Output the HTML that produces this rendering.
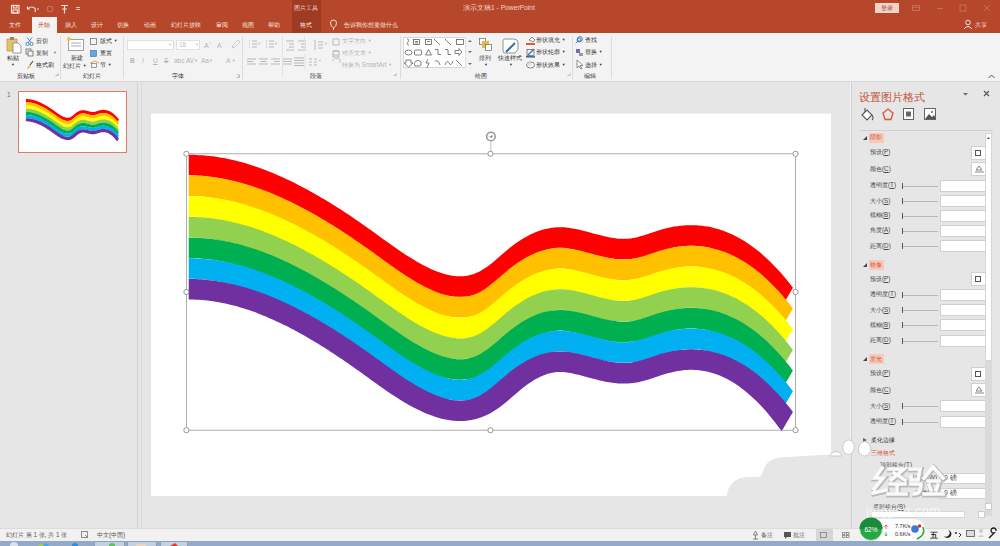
<!DOCTYPE html>
<html><head><meta charset="utf-8">
<style>
*{margin:0;padding:0;box-sizing:border-box}
html,body{width:1000px;height:546px;overflow:hidden;background:#e6e6e6;font-family:"Liberation Sans",sans-serif;position:relative}
.a{position:absolute}
.t{position:absolute;white-space:nowrap;font-family:"Liberation Sans",sans-serif}
svg{overflow:visible}
</style></head><body>
<div class="a" style="left:0px;top:0px;width:1000px;height:33px;background:#b7472a"></div>
<div class="a" style="left:292px;top:0px;width:29px;height:33px;background:#9f3b22"></div>
<svg class="a" style="left:0;top:0" width="100" height="17">
<g fill="none" stroke="#f6ddd6" stroke-width="1.2">
<rect x="11.5" y="5.5" width="7.5" height="7.5"/><rect x="13.5" y="5.5" width="3.5" height="2.5"/><rect x="13" y="10" width="4.5" height="3"/>
<path d="M28,8.5 q4,-3 7,0 q1,1.5 0,3.5"/><path d="M27.5,6.5 v2.5 h2.5"/>
<path d="M61,5.5 h7 M64.5,5.5 v8 M62,9 h5"/>
</g>
<path d="M37,9 h2" stroke="#f6ddd6" stroke-width="1"/>
<circle cx="50" cy="9" r="3" fill="none" stroke="#cf7a62" stroke-width="1"/>
<path d="M76,7.5 h4 M76,9.5 h4" stroke="#f6ddd6" stroke-width="0.8"/>
</svg>
<div class="t" style="left:294px;top:3.9px;font-size:6.3px;line-height:8.2px;color:#f3d5cc;font-weight:normal;">图片工具</div>
<div class="t" style="left:463px;top:3.6px;font-size:6.7px;line-height:8.7px;color:#f3d5cc;font-weight:normal;">演示文稿1 - PowerPoint</div>
<div class="a" style="left:875px;top:3px;width:24px;height:10px;background:#f3d3c9"></div>
<div class="t" style="left:881px;top:3.9px;font-size:6.3px;line-height:8.2px;color:#8d3520;font-weight:normal;">登录</div>
<svg class="a" style="left:900;top:0" width="100" height="33">
<g fill="none" stroke="#c9735d" stroke-width="0.9">
<rect x="12.5" y="5.5" width="7" height="5"/><path d="M12.5,7.5 h7"/>
<path d="M37,8.5 h6"/>
<rect x="60" y="5" width="6" height="6"/>
<path d="M84,5 l6,6 M90,5 l-6,6"/>
</g>
<g fill="none" stroke="#f6ddd6" stroke-width="1">
<circle cx="68" cy="22.5" r="2.3"/><path d="M64,29 q4,-5 8,0"/>
</g>
</svg>
<div class="t" style="left:975px;top:20.9px;font-size:6.3px;line-height:8.2px;color:#f6ddd6;font-weight:normal;">共享</div>
<div class="a" style="left:32px;top:17px;width:25px;height:16px;background:#f3f3f3"></div>
<div class="t" style="left:9px;top:20.9px;font-size:6.3px;line-height:8.2px;color:#f8e3dc;font-weight:normal;">文件</div>
<div class="t" style="left:65px;top:20.9px;font-size:6.3px;line-height:8.2px;color:#f8e3dc;font-weight:normal;">插入</div>
<div class="t" style="left:91px;top:20.9px;font-size:6.3px;line-height:8.2px;color:#f8e3dc;font-weight:normal;">设计</div>
<div class="t" style="left:117px;top:20.9px;font-size:6.3px;line-height:8.2px;color:#f8e3dc;font-weight:normal;">切换</div>
<div class="t" style="left:144px;top:20.9px;font-size:6.3px;line-height:8.2px;color:#f8e3dc;font-weight:normal;">动画</div>
<div class="t" style="left:171px;top:20.9px;font-size:6.3px;line-height:8.2px;color:#f8e3dc;font-weight:normal;">幻灯片放映</div>
<div class="t" style="left:216px;top:20.9px;font-size:6.3px;line-height:8.2px;color:#f8e3dc;font-weight:normal;">审阅</div>
<div class="t" style="left:242px;top:20.9px;font-size:6.3px;line-height:8.2px;color:#f8e3dc;font-weight:normal;">视图</div>
<div class="t" style="left:268px;top:20.9px;font-size:6.3px;line-height:8.2px;color:#f8e3dc;font-weight:normal;">帮助</div>
<div class="t" style="left:300px;top:20.9px;font-size:6.3px;line-height:8.2px;color:#f8e3dc;font-weight:normal;">格式</div>
<div class="t" style="left:38px;top:20.9px;font-size:6.3px;line-height:8.2px;color:#b7472a;font-weight:normal;">开始</div>
<svg class="a" style="left:328;top:18" width="12" height="14"><g fill="none" stroke="#f6ddd6" stroke-width="1"><path d="M5.5,12 v-2 q-3,-2 -3,-5 a3,3 0 0 1 6,0 q0,3 -3,5"/></g></svg>
<div class="t" style="left:344px;top:21.0px;font-size:6.2px;line-height:8.1px;color:#f8e3dc;font-weight:normal;">告诉我你想要做什么</div>
<div class="a" style="left:0px;top:33px;width:1000px;height:48px;background:#f3f3f3"></div>
<div class="a" style="left:0px;top:81px;width:1000px;height:1px;background:#d8d8d8"></div>
<div class="a" style="left:60px;top:36px;width:1px;height:43px;background:#dcdcdc"></div>
<div class="a" style="left:123px;top:36px;width:1px;height:43px;background:#dcdcdc"></div>
<div class="a" style="left:242px;top:36px;width:1px;height:43px;background:#dcdcdc"></div>
<div class="a" style="left:400px;top:36px;width:1px;height:43px;background:#dcdcdc"></div>
<div class="a" style="left:572px;top:36px;width:1px;height:43px;background:#dcdcdc"></div>
<div class="a" style="left:611px;top:36px;width:1px;height:43px;background:#dcdcdc"></div>
<svg class="a" style="left:0;top:33" width="62" height="48">
<rect x="7" y="6" width="10" height="12" fill="#e6c16a" stroke="#b08a3a" stroke-width="0.6"/>
<rect x="10" y="4" width="4" height="3" fill="#888"/>
<path d="M13,10 h5 l3,3 v7 h-8 z" fill="#fff" stroke="#777" stroke-width="0.7"/>
<g fill="none" stroke="#3b7fc4" stroke-width="0.9"><circle cx="27.5" cy="11" r="1.6"/><circle cx="31.5" cy="11" r="1.6"/><path d="M28,9.5 l4,-5 M31,9.5 l-4,-5"/></g>
<g fill="none" stroke="#666" stroke-width="0.8"><rect x="26" y="16" width="5" height="5"/><rect x="28" y="18" width="5" height="5" fill="#f3f3f3"/></g>
<path d="M27,35 l3,-3 l1,1 l-3,3 z" fill="#e2b04a"/><path d="M30,32 l3,-4" stroke="#555" stroke-width="1.2"/>
<path d="M55.5,42.5 h2.5 v-2.5" fill="none" stroke="#888" stroke-width="0.6"/>
</svg>
<div class="t" style="left:7px;top:53.9px;font-size:6.3px;line-height:8.2px;color:#363636;font-weight:normal;">粘贴</div>
<div class="t" style="left:11px;top:62.5px;font-size:3.8px;line-height:4.9px;color:#363636;font-weight:normal;">▼</div>
<div class="t" style="left:36px;top:36.9px;font-size:6.3px;line-height:8.2px;color:#363636;font-weight:normal;">剪切</div>
<div class="t" style="left:36px;top:48.9px;font-size:6.3px;line-height:8.2px;color:#363636;font-weight:normal;">复制</div>
<div class="t" style="left:53px;top:50.5px;font-size:3.8px;line-height:4.9px;color:#777;font-weight:normal;">▼</div>
<div class="t" style="left:36px;top:60.9px;font-size:6.3px;line-height:8.2px;color:#363636;font-weight:normal;">格式刷</div>
<div class="t" style="left:17px;top:71.9px;font-size:6.3px;line-height:8.2px;color:#363636;font-weight:normal;">剪贴板</div>
<svg class="a" style="left:60;top:33" width="64" height="48">
<rect x="8.5" y="6.5" width="15" height="11" fill="#fff" stroke="#888" stroke-width="0.8"/>
<path d="M11,10 h10 M11,13 h10" stroke="#aab" stroke-width="1.2"/>
<circle cx="9" cy="6" r="2" fill="#f2c744"/>
<rect x="30.5" y="5.5" width="6" height="6" fill="none" stroke="#777" stroke-width="0.8"/>
<rect x="30.5" y="17.5" width="6" height="6" fill="#6aa3d8" stroke="#3a6ea5" stroke-width="0.6"/>
<path d="M30,30 l5,-2 l4,2" stroke="#e8a070" stroke-width="1" fill="none"/><rect x="31.5" y="30.5" width="5" height="4" fill="none" stroke="#777" stroke-width="0.7"/>
</svg>
<div class="t" style="left:71px;top:53.9px;font-size:6.3px;line-height:8.2px;color:#363636;font-weight:normal;">新建</div>
<div class="t" style="left:63px;top:61.9px;font-size:6.3px;line-height:8.2px;color:#363636;font-weight:normal;">幻灯片 <span style="font-size:3.8px;vertical-align:1px">▼</span></div>
<div class="t" style="left:100px;top:36.9px;font-size:6.3px;line-height:8.2px;color:#363636;font-weight:normal;">版式 <span style="font-size:3.8px;vertical-align:1px">▼</span></div>
<div class="t" style="left:100px;top:48.9px;font-size:6.3px;line-height:8.2px;color:#363636;font-weight:normal;">重置</div>
<div class="t" style="left:100px;top:60.9px;font-size:6.3px;line-height:8.2px;color:#363636;font-weight:normal;">节 <span style="font-size:3.8px;vertical-align:1px">▼</span></div>
<div class="t" style="left:83px;top:71.9px;font-size:6.3px;line-height:8.2px;color:#363636;font-weight:normal;">幻灯片</div>
<div class="a" style="left:127px;top:40px;width:47px;height:10px;background:#fff;border:1px solid #e0e0e0"></div>
<div class="a" style="left:176px;top:40px;width:24px;height:10px;background:#fff;border:1px solid #e0e0e0"></div>
<div class="t" style="left:168px;top:42.5px;font-size:3.8px;line-height:4.9px;color:#ccc;font-weight:normal;">▼</div>
<div class="t" style="left:195px;top:42.5px;font-size:3.8px;line-height:4.9px;color:#ccc;font-weight:normal;">▼</div>
<div class="t" style="left:179px;top:40.9px;font-size:6.3px;line-height:8.2px;color:#bbb;font-weight:normal;">18</div>
<div class="t" style="left:204px;top:38.5px;font-size:7px;line-height:9.1px;color:#b4b4b4;font-weight:normal;">A<sup style="font-size:4px">^</sup></div>
<div class="t" style="left:217px;top:38.5px;font-size:7px;line-height:9.1px;color:#b4b4b4;font-weight:normal;">A<sup style="font-size:4px">ˇ</sup></div>
<svg class="a" style="left:231px;top:40px" width="9" height="9"><path d="M1,8 l1,-3 l5,-5 l2,2 l-5,5 z" fill="none" stroke="#c0c0c0" stroke-width="0.8"/></svg>
<div class="t" style="left:130px;top:56.8px;font-size:6.5px;line-height:8.5px;color:#b4b4b4;font-weight:normal;"><b>B</b></div>
<div class="t" style="left:142px;top:56.8px;font-size:6.5px;line-height:8.5px;color:#b4b4b4;font-weight:normal;"><i>I</i></div>
<div class="t" style="left:153px;top:56.8px;font-size:6.5px;line-height:8.5px;color:#b4b4b4;font-weight:normal;"><u>U</u></div>
<div class="t" style="left:164px;top:56.8px;font-size:6.5px;line-height:8.5px;color:#b4b4b4;font-weight:normal;"><s>S</s></div>
<div class="t" style="left:174px;top:56.8px;font-size:6.5px;line-height:8.5px;color:#b4b4b4;font-weight:normal;">abc</div>
<div class="t" style="left:186px;top:56.8px;font-size:6.5px;line-height:8.5px;color:#b4b4b4;font-weight:normal;">AV<span style="font-size:3.8px;vertical-align:1px">▼</span></div>
<div class="t" style="left:201px;top:56.8px;font-size:6.5px;line-height:8.5px;color:#b4b4b4;font-weight:normal;">Aa<span style="font-size:3.8px;vertical-align:1px">▼</span></div>
<div class="t" style="left:226px;top:56.8px;font-size:6.5px;line-height:8.5px;color:#b4b4b4;font-weight:normal;">A <span style="font-size:3.8px;vertical-align:1px">▼</span></div>
<div class="t" style="left:172px;top:71.9px;font-size:6.3px;line-height:8.2px;color:#363636;font-weight:normal;">字体</div>
<svg class="a" style="left:236;top:73" width="6" height="6"><path d="M0.5,4.5 h3 v-3 M1,1 l3,3" fill="none" stroke="#999" stroke-width="0.6"/></svg>
<svg class="a" style="left:243;top:33" width="160" height="48">
<g stroke="#b8b8b8" stroke-width="1" fill="none">
<path d="M6,8 h1 M9,8 h5 M6,11 h1 M9,11 h5 M6,14 h1 M9,14 h5"/>
<path d="M23,8 h1 M26,8 h5 M23,11 h1 M26,11 h5 M23,14 h1 M26,14 h5"/>
<path d="M43,8 h8 M46,11 h5 M46,14 h5 M43,17 h8"/>
<path d="M55,8 h8 M58,11 h5 M58,14 h5 M55,17 h8"/>
<path d="M72,7 v10 M75,9 h5 M75,12 h5 M75,15 h5"/>
<path d="M90,6 h6 v6 h-6 z M90,18 h6 M90,22 h6"/>
<path d="M90,18 h6 v6 h-6 z"/>
<path d="M4,26 h9 M4,28.5 h6 M4,31 h9"/>
<path d="M16,26 h9 M17.5,28.5 h6 M16,31 h9"/>
<path d="M28,26 h9 M31,28.5 h6 M28,31 h9"/>
<path d="M40,26 h9 M40,28.5 h9 M40,31 h9"/>
<path d="M51,25 h10 M51,27.5 h10 M51,30 h10 M51,32.5 h10"/>
<path d="M66,26 h3 M66,29 h3 M66,32 h3 M71,26 h3 M71,29 h3 M71,32 h3"/>
</g>
<path d="M89,28 q3,-4 8,-2 v4" fill="none" stroke="#bbb" stroke-width="0.8"/>
<path d="M39.5,3 v40 M61.5,3 v15 M62,22 v15" stroke="#e2e2e2" stroke-width="1"/>
<path d="M150.5,42.5 h2.5 v-2.5" fill="none" stroke="#999" stroke-width="0.6"/>
</svg>
<div class="t" style="left:257px;top:41.5px;font-size:3.8px;line-height:4.9px;color:#c4c4c4;font-weight:normal;">▼</div>
<div class="t" style="left:274px;top:41.5px;font-size:3.8px;line-height:4.9px;color:#c4c4c4;font-weight:normal;">▼</div>
<div class="t" style="left:324px;top:41.5px;font-size:3.8px;line-height:4.9px;color:#c4c4c4;font-weight:normal;">▼</div>
<div class="t" style="left:318px;top:58.5px;font-size:3.8px;line-height:4.9px;color:#c4c4c4;font-weight:normal;">▼</div>
<div class="t" style="left:342px;top:36.9px;font-size:6.3px;line-height:8.2px;color:#b4b4b4;font-weight:normal;">文字方向 <span style="font-size:3.8px;vertical-align:1px">▼</span></div>
<div class="t" style="left:342px;top:48.9px;font-size:6.3px;line-height:8.2px;color:#b4b4b4;font-weight:normal;">对齐文本 <span style="font-size:3.8px;vertical-align:1px">▼</span></div>
<div class="t" style="left:342px;top:60.9px;font-size:6.3px;line-height:8.2px;color:#b4b4b4;font-weight:normal;">转换为 SmartArt <span style="font-size:3.8px;vertical-align:1px">▼</span></div>
<div class="t" style="left:310px;top:71.9px;font-size:6.3px;line-height:8.2px;color:#363636;font-weight:normal;">段落</div>
<div class="a" style="left:403px;top:37px;width:70px;height:31px;background:#fff;border:1px solid #d6d6d6"></div>
<div class="a" style="left:465px;top:37px;width:8px;height:31px;background:#f3f3f3;border-left:1px solid #e0e0e0"></div>
<svg class="a" style="left:400;top:33" width="175" height="48">
<g fill="none" stroke="#606060" stroke-width="0.8">
<path d="M7,6 q3,0 1,3 q-2,3 1,3"/>
<rect x="13.5" y="6.5" width="6" height="5"/><path d="M15,8.5 h3 M15,10 h3"/>
<rect x="25.5" y="6.5" width="6" height="5"/><path d="M27,8.5 h3"/>
<path d="M34,6 l6,6 M45,6 l6,6"/><rect x="56.5" y="6.5" width="7" height="5"/>
<ellipse cx="8.5" cy="19.5" rx="3.5" ry="2.5"/><rect x="14.5" y="17" width="7" height="5" rx="1"/>
<path d="M28.5,16.5 l3,5.5 h-6 z"/><path d="M35,16.5 h3 v5 h3"/><path d="M45,16.5 h3 v5 h3"/>
<path d="M55,17.5 h4 v-2 l3,3.5 l-3,3.5 v-2 h-4 z"/>
<path d="M6,27 h5 v3 h2 l-4.5,4 l-4.5,-4 h2 z"/><path d="M15,33 q-2,-3 1,-5 q2,-2 5,1 q1,4 -2,4 z"/>
<path d="M28,26 l-2,4 h3 l-2,5"/><path d="M35,28 q4,-1 5,4"/><path d="M45,32 q2,-6 4,-2 q2,4 4,-2"/><path d="M56,27 l6,6"/>
</g>
<g fill="#707070"><path d="M68,9 l2,-2 l2,2 z"/><path d="M68,18 l2,2 l2,-2 z"/><path d="M68,29 h4 M68,30 l2,2 l2,-2 z"/></g>
<rect x="79.5" y="5.5" width="6" height="6" fill="#fff" stroke="#666" stroke-width="0.7"/>
<rect x="82" y="8" width="7" height="7" fill="#e8b64c"/>
<rect x="85.5" y="11.5" width="6" height="6" fill="#fff" stroke="#666" stroke-width="0.7"/>
<path d="M105,6 h9 q4,0 4,4 v6 l-3,4 h-10 q-2,0 -2,-2 v-10 q0,-2 2,-2 z" fill="#fff" stroke="#777" stroke-width="0.8"/>
<path d="M106,19 l9,-9" stroke="#3a6ea5" stroke-width="2"/>
<path d="M129,7 l3,-3 l3,3 l-2,2 z" fill="none" stroke="#555" stroke-width="0.7"/><rect x="126" y="10" width="9" height="2" fill="#e35b2c"/>
<rect x="127" y="16.5" width="7" height="6" fill="none" stroke="#555" stroke-width="0.7"/><path d="M128,22 l6,-6" stroke="#3a6ea5" stroke-width="1.2"/><rect x="126" y="23" width="9" height="1.6" fill="#3a6ea5"/>
<ellipse cx="130.5" cy="32" rx="4" ry="3" fill="#fff" stroke="#666" stroke-width="0.8"/><ellipse cx="129.5" cy="31" rx="2.5" ry="1.8" fill="#ddd"/>
<circle cx="179" cy="7" r="2" fill="none" stroke="#2f6db5" stroke-width="0.9"/>
<path d="M167.5,42.5 h2.5 v-2.5" fill="none" stroke="#999" stroke-width="0.6"/>
</svg>
<div class="t" style="left:479px;top:53.9px;font-size:6.3px;line-height:8.2px;color:#363636;font-weight:normal;">排列</div>
<div class="t" style="left:484px;top:63.0px;font-size:3.8px;line-height:4.9px;color:#363636;font-weight:normal;">▼</div>
<div class="t" style="left:498px;top:53.9px;font-size:6.3px;line-height:8.2px;color:#363636;font-weight:normal;">快速样式</div>
<div class="t" style="left:509px;top:63.0px;font-size:3.8px;line-height:4.9px;color:#363636;font-weight:normal;">▼</div>
<div class="t" style="left:536px;top:35.9px;font-size:6.3px;line-height:8.2px;color:#363636;font-weight:normal;">形状填充 <span style="font-size:3.8px;vertical-align:1px">▼</span></div>
<div class="t" style="left:536px;top:48.4px;font-size:6.3px;line-height:8.2px;color:#363636;font-weight:normal;">形状轮廓 <span style="font-size:3.8px;vertical-align:1px">▼</span></div>
<div class="t" style="left:536px;top:60.9px;font-size:6.3px;line-height:8.2px;color:#363636;font-weight:normal;">形状效果 <span style="font-size:3.8px;vertical-align:1px">▼</span></div>
<div class="t" style="left:475px;top:71.9px;font-size:6.3px;line-height:8.2px;color:#363636;font-weight:normal;">绘图</div>
<svg class="a" style="left:574;top:33" width="40" height="48">
<g fill="none" stroke="#2f6db5" stroke-width="0.9"><circle cx="6" cy="6" r="2.4"/><path d="M4.2,7.8 l-2.5,2.5"/></g>
<g fill="#7a6aa8"><rect x="2" y="16" width="4" height="4"/><rect x="5" y="20" width="4" height="3" fill="#9b8fc4"/></g>
<path d="M3,27 v8 l2,-2 l2,3 l1,-0.5 l-2,-3 h3 z" fill="#fff" stroke="#666" stroke-width="0.7"/>
</svg>
<div class="t" style="left:585px;top:35.9px;font-size:6.3px;line-height:8.2px;color:#363636;font-weight:normal;">查找</div>
<div class="t" style="left:585px;top:48.4px;font-size:6.3px;line-height:8.2px;color:#363636;font-weight:normal;">替换 <span style="font-size:3.8px;vertical-align:1px">▼</span></div>
<div class="t" style="left:585px;top:60.9px;font-size:6.3px;line-height:8.2px;color:#363636;font-weight:normal;">选择 <span style="font-size:3.8px;vertical-align:1px">▼</span></div>
<div class="t" style="left:584px;top:71.9px;font-size:6.3px;line-height:8.2px;color:#363636;font-weight:normal;">编辑</div>
<svg class="a" style="left:986;top:72" width="12" height="8"><path d="M2.5,6 l3,-3 l3,3" fill="none" stroke="#555" stroke-width="1"/></svg>
<div class="a" style="left:0px;top:82px;width:137px;height:446px;background:#e6e6e6"></div>
<div class="a" style="left:137px;top:82px;width:1px;height:446px;background:#d2d2d2"></div>
<div class="a" style="left:138px;top:82px;width:714px;height:446px;background:#e6e6e6"></div>
<div class="a" style="left:141px;top:82px;width:1px;height:446px;background:#dcdcdc"></div>
<div class="t" style="left:7px;top:90.8px;font-size:6.5px;line-height:8.5px;color:#666;font-weight:normal;">1</div>
<div class="a" style="left:18px;top:91px;width:109px;height:62px;background:#fff;border:1.5px solid #de7b62"></div>
<svg class="a" style="left:0;top:0" width="1000" height="546">
<defs><clipPath id="capclip" clipPathUnits="userSpaceOnUse"><path d="M0,-50 L992.1,-50 L549.8,700 L0,700 Z"/></clipPath></defs>
<g transform="translate(20.1,92.6) scale(0.154,0.154) translate(-151,-113)"><g fill="none" stroke-width="20.5" stroke-linecap="butt" stroke-linejoin="round"><path d="M188.7,165.1 L191.5,165.1 L194.4,165.1 L197.2,165.3 L200.1,165.4 L203.0,165.6 L205.8,165.9 L208.7,166.2 L211.6,166.5 L214.4,166.9 L217.3,167.4 L220.2,167.8 L223.1,168.4 L226.0,169.0 L228.9,169.6 L231.8,170.3 L234.6,171.0 L237.5,171.7 L240.5,172.5 L243.4,173.4 L246.3,174.3 L249.2,175.2 L252.1,176.2 L255.0,177.2 L257.9,178.2 L260.9,179.3 L263.8,180.5 L266.7,181.6 L269.7,182.8 L272.6,184.1 L275.5,185.4 L278.5,186.7 L281.4,188.1 L284.4,189.4 L287.3,190.9 L290.3,192.3 L293.2,193.8 L296.2,195.4 L299.2,196.9 L302.1,198.5 L305.1,200.2 L308.1,201.8 L311.0,203.5 L314.0,205.2 L317.0,207.0 L319.9,208.7 L322.9,210.5 L325.9,212.4 L328.9,214.2 L331.9,216.1 L334.9,218.0 L337.8,220.0 L340.8,221.9 L343.8,223.9 L346.8,225.9 L349.8,228.0 L352.8,230.0 L355.8,232.1 L358.8,234.2 L361.8,236.3 L364.8,238.4 L367.8,240.6 L370.8,242.8 L373.9,245.0 L376.9,247.2 L380.0,249.4 L383.0,251.6 L386.1,253.7 L389.2,255.9 L392.3,258.1 L395.4,260.2 L398.5,262.3 L401.6,264.3 L404.8,266.3 L408.0,268.3 L411.1,270.2 L414.3,272.0 L417.6,273.8 L420.8,275.4 L424.0,277.0 L427.3,278.6 L430.6,280.0 L434.0,281.3 L437.3,282.5 L440.7,283.6 L444.2,284.5 L447.7,285.3 L451.2,285.9 L454.9,286.4 L458.6,286.6 L462.3,286.6 L466.1,286.3 L469.9,285.7 L473.7,284.8 L477.5,283.6 L481.2,282.1 L485.0,280.3 L488.6,278.1 L492.1,275.8 L495.4,273.3 L498.7,270.7 L501.9,268.1 L505.0,265.4 L508.0,262.8 L511.0,260.2 L513.9,257.7 L516.8,255.4 L519.6,253.3 L522.4,251.2 L525.2,249.4 L527.9,247.6 L530.6,246.0 L533.3,244.6 L536.0,243.2 L538.7,242.1 L541.3,241.0 L543.9,240.1 L546.5,239.3 L549.1,238.7 L551.6,238.2 L554.2,237.8 L556.7,237.6 L559.2,237.5 L561.7,237.5 L564.3,237.6 L566.9,237.9 L569.6,238.3 L572.3,238.8 L575.1,239.3 L577.9,240.0 L580.8,240.7 L583.7,241.4 L586.7,242.2 L589.7,243.1 L592.8,243.9 L595.9,244.7 L599.0,245.5 L602.2,246.3 L605.5,247.0 L608.8,247.7 L612.2,248.2 L615.6,248.7 L619.1,249.0 L622.6,249.1 L626.2,249.1 L629.8,248.8 L633.5,248.4 L637.0,247.7 L640.5,246.9 L643.8,246.0 L647.1,245.0 L650.3,244.0 L653.4,242.9 L656.4,241.9 L659.4,240.9 L662.2,240.0 L665.0,239.2 L667.8,238.5 L670.6,237.8 L673.3,237.2 L676.1,236.7 L678.8,236.3 L681.6,235.9 L684.3,235.7 L687.0,235.5 L689.7,235.4 L692.5,235.4 L695.2,235.5 L697.9,235.7 L700.6,235.9 L703.3,236.3 L706.0,236.7 L708.7,237.2 L711.4,237.9 L714.1,238.6 L716.8,239.4 L719.5,240.3 L722.3,241.3 L725.0,242.5 L727.7,243.7 L730.5,245.0 L733.3,246.5 L736.0,248.1 L738.8,249.7 L741.6,251.5 L744.4,253.4 L747.2,255.5 L750.0,257.6 L752.9,259.9 L755.7,262.3 L758.6,264.9 L761.4,267.5 L764.3,270.3 L767.2,273.3 L770.1,276.3 L773.0,279.5 L775.9,282.9 L778.8,286.4 L781.7,290.0 L784.6,293.8 L789.5,300.2 L794.3,306.5 L799.2,312.9" transform="translate(0,0.00)" stroke="#FF0000" clip-path="url(#capclip)"/>
<path d="M188.7,165.1 L191.5,165.1 L194.4,165.1 L197.2,165.3 L200.1,165.4 L203.0,165.6 L205.8,165.9 L208.7,166.2 L211.6,166.5 L214.4,166.9 L217.3,167.4 L220.2,167.8 L223.1,168.4 L226.0,169.0 L228.9,169.6 L231.8,170.3 L234.6,171.0 L237.5,171.7 L240.5,172.5 L243.4,173.4 L246.3,174.3 L249.2,175.2 L252.1,176.2 L255.0,177.2 L257.9,178.2 L260.9,179.3 L263.8,180.5 L266.7,181.6 L269.7,182.8 L272.6,184.1 L275.5,185.4 L278.5,186.7 L281.4,188.1 L284.4,189.4 L287.3,190.9 L290.3,192.3 L293.2,193.8 L296.2,195.4 L299.2,196.9 L302.1,198.5 L305.1,200.2 L308.1,201.8 L311.0,203.5 L314.0,205.2 L317.0,207.0 L319.9,208.7 L322.9,210.5 L325.9,212.4 L328.9,214.2 L331.9,216.1 L334.9,218.0 L337.8,220.0 L340.8,221.9 L343.8,223.9 L346.8,225.9 L349.8,228.0 L352.8,230.0 L355.8,232.1 L358.8,234.2 L361.8,236.3 L364.8,238.4 L367.8,240.6 L370.8,242.8 L373.9,245.0 L376.9,247.2 L380.0,249.4 L383.0,251.6 L386.1,253.7 L389.2,255.9 L392.3,258.1 L395.4,260.2 L398.5,262.3 L401.6,264.3 L404.8,266.3 L408.0,268.3 L411.1,270.2 L414.3,272.0 L417.6,273.8 L420.8,275.4 L424.0,277.0 L427.3,278.6 L430.6,280.0 L434.0,281.3 L437.3,282.5 L440.7,283.6 L444.2,284.5 L447.7,285.3 L451.2,285.9 L454.9,286.4 L458.6,286.6 L462.3,286.6 L466.1,286.3 L469.9,285.7 L473.7,284.8 L477.5,283.6 L481.2,282.1 L485.0,280.3 L488.6,278.1 L492.1,275.8 L495.4,273.3 L498.7,270.7 L501.9,268.1 L505.0,265.4 L508.0,262.8 L511.0,260.2 L513.9,257.7 L516.8,255.4 L519.6,253.3 L522.4,251.2 L525.2,249.4 L527.9,247.6 L530.6,246.0 L533.3,244.6 L536.0,243.2 L538.7,242.1 L541.3,241.0 L543.9,240.1 L546.5,239.3 L549.1,238.7 L551.6,238.2 L554.2,237.8 L556.7,237.6 L559.2,237.5 L561.7,237.5 L564.3,237.6 L566.9,237.9 L569.6,238.3 L572.3,238.8 L575.1,239.3 L577.9,240.0 L580.8,240.7 L583.7,241.4 L586.7,242.2 L589.7,243.1 L592.8,243.9 L595.9,244.7 L599.0,245.5 L602.2,246.3 L605.5,247.0 L608.8,247.7 L612.2,248.2 L615.6,248.7 L619.1,249.0 L622.6,249.1 L626.2,249.1 L629.8,248.8 L633.5,248.4 L637.0,247.7 L640.5,246.9 L643.8,246.0 L647.1,245.0 L650.3,244.0 L653.4,242.9 L656.4,241.9 L659.4,240.9 L662.2,240.0 L665.0,239.2 L667.8,238.5 L670.6,237.8 L673.3,237.2 L676.1,236.7 L678.8,236.3 L681.6,235.9 L684.3,235.7 L687.0,235.5 L689.7,235.4 L692.5,235.4 L695.2,235.5 L697.9,235.7 L700.6,235.9 L703.3,236.3 L706.0,236.7 L708.7,237.2 L711.4,237.9 L714.1,238.6 L716.8,239.4 L719.5,240.3 L722.3,241.3 L725.0,242.5 L727.7,243.7 L730.5,245.0 L733.3,246.5 L736.0,248.1 L738.8,249.7 L741.6,251.5 L744.4,253.4 L747.2,255.5 L750.0,257.6 L752.9,259.9 L755.7,262.3 L758.6,264.9 L761.4,267.5 L764.3,270.3 L767.2,273.3 L770.1,276.3 L773.0,279.5 L775.9,282.9 L778.8,286.4 L781.7,290.0 L784.6,293.8 L789.5,300.2 L794.3,306.5 L799.2,312.9" transform="translate(0,20.70)" stroke="#FFC000" clip-path="url(#capclip)"/>
<path d="M188.7,165.1 L191.5,165.1 L194.4,165.1 L197.2,165.3 L200.1,165.4 L203.0,165.6 L205.8,165.9 L208.7,166.2 L211.6,166.5 L214.4,166.9 L217.3,167.4 L220.2,167.8 L223.1,168.4 L226.0,169.0 L228.9,169.6 L231.8,170.3 L234.6,171.0 L237.5,171.7 L240.5,172.5 L243.4,173.4 L246.3,174.3 L249.2,175.2 L252.1,176.2 L255.0,177.2 L257.9,178.2 L260.9,179.3 L263.8,180.5 L266.7,181.6 L269.7,182.8 L272.6,184.1 L275.5,185.4 L278.5,186.7 L281.4,188.1 L284.4,189.4 L287.3,190.9 L290.3,192.3 L293.2,193.8 L296.2,195.4 L299.2,196.9 L302.1,198.5 L305.1,200.2 L308.1,201.8 L311.0,203.5 L314.0,205.2 L317.0,207.0 L319.9,208.7 L322.9,210.5 L325.9,212.4 L328.9,214.2 L331.9,216.1 L334.9,218.0 L337.8,220.0 L340.8,221.9 L343.8,223.9 L346.8,225.9 L349.8,228.0 L352.8,230.0 L355.8,232.1 L358.8,234.2 L361.8,236.3 L364.8,238.4 L367.8,240.6 L370.8,242.8 L373.9,245.0 L376.9,247.2 L380.0,249.4 L383.0,251.6 L386.1,253.7 L389.2,255.9 L392.3,258.1 L395.4,260.2 L398.5,262.3 L401.6,264.3 L404.8,266.3 L408.0,268.3 L411.1,270.2 L414.3,272.0 L417.6,273.8 L420.8,275.4 L424.0,277.0 L427.3,278.6 L430.6,280.0 L434.0,281.3 L437.3,282.5 L440.7,283.6 L444.2,284.5 L447.7,285.3 L451.2,285.9 L454.9,286.4 L458.6,286.6 L462.3,286.6 L466.1,286.3 L469.9,285.7 L473.7,284.8 L477.5,283.6 L481.2,282.1 L485.0,280.3 L488.6,278.1 L492.1,275.8 L495.4,273.3 L498.7,270.7 L501.9,268.1 L505.0,265.4 L508.0,262.8 L511.0,260.2 L513.9,257.7 L516.8,255.4 L519.6,253.3 L522.4,251.2 L525.2,249.4 L527.9,247.6 L530.6,246.0 L533.3,244.6 L536.0,243.2 L538.7,242.1 L541.3,241.0 L543.9,240.1 L546.5,239.3 L549.1,238.7 L551.6,238.2 L554.2,237.8 L556.7,237.6 L559.2,237.5 L561.7,237.5 L564.3,237.6 L566.9,237.9 L569.6,238.3 L572.3,238.8 L575.1,239.3 L577.9,240.0 L580.8,240.7 L583.7,241.4 L586.7,242.2 L589.7,243.1 L592.8,243.9 L595.9,244.7 L599.0,245.5 L602.2,246.3 L605.5,247.0 L608.8,247.7 L612.2,248.2 L615.6,248.7 L619.1,249.0 L622.6,249.1 L626.2,249.1 L629.8,248.8 L633.5,248.4 L637.0,247.7 L640.5,246.9 L643.8,246.0 L647.1,245.0 L650.3,244.0 L653.4,242.9 L656.4,241.9 L659.4,240.9 L662.2,240.0 L665.0,239.2 L667.8,238.5 L670.6,237.8 L673.3,237.2 L676.1,236.7 L678.8,236.3 L681.6,235.9 L684.3,235.7 L687.0,235.5 L689.7,235.4 L692.5,235.4 L695.2,235.5 L697.9,235.7 L700.6,235.9 L703.3,236.3 L706.0,236.7 L708.7,237.2 L711.4,237.9 L714.1,238.6 L716.8,239.4 L719.5,240.3 L722.3,241.3 L725.0,242.5 L727.7,243.7 L730.5,245.0 L733.3,246.5 L736.0,248.1 L738.8,249.7 L741.6,251.5 L744.4,253.4 L747.2,255.5 L750.0,257.6 L752.9,259.9 L755.7,262.3 L758.6,264.9 L761.4,267.5 L764.3,270.3 L767.2,273.3 L770.1,276.3 L773.0,279.5 L775.9,282.9 L778.8,286.4 L781.7,290.0 L784.6,293.8 L789.5,300.2 L794.3,306.5 L799.2,312.9" transform="translate(0,41.40)" stroke="#FFFF00" clip-path="url(#capclip)"/>
<path d="M188.7,165.1 L191.5,165.1 L194.4,165.1 L197.2,165.3 L200.1,165.4 L203.0,165.6 L205.8,165.9 L208.7,166.2 L211.6,166.5 L214.4,166.9 L217.3,167.4 L220.2,167.8 L223.1,168.4 L226.0,169.0 L228.9,169.6 L231.8,170.3 L234.6,171.0 L237.5,171.7 L240.5,172.5 L243.4,173.4 L246.3,174.3 L249.2,175.2 L252.1,176.2 L255.0,177.2 L257.9,178.2 L260.9,179.3 L263.8,180.5 L266.7,181.6 L269.7,182.8 L272.6,184.1 L275.5,185.4 L278.5,186.7 L281.4,188.1 L284.4,189.4 L287.3,190.9 L290.3,192.3 L293.2,193.8 L296.2,195.4 L299.2,196.9 L302.1,198.5 L305.1,200.2 L308.1,201.8 L311.0,203.5 L314.0,205.2 L317.0,207.0 L319.9,208.7 L322.9,210.5 L325.9,212.4 L328.9,214.2 L331.9,216.1 L334.9,218.0 L337.8,220.0 L340.8,221.9 L343.8,223.9 L346.8,225.9 L349.8,228.0 L352.8,230.0 L355.8,232.1 L358.8,234.2 L361.8,236.3 L364.8,238.4 L367.8,240.6 L370.8,242.8 L373.9,245.0 L376.9,247.2 L380.0,249.4 L383.0,251.6 L386.1,253.7 L389.2,255.9 L392.3,258.1 L395.4,260.2 L398.5,262.3 L401.6,264.3 L404.8,266.3 L408.0,268.3 L411.1,270.2 L414.3,272.0 L417.6,273.8 L420.8,275.4 L424.0,277.0 L427.3,278.6 L430.6,280.0 L434.0,281.3 L437.3,282.5 L440.7,283.6 L444.2,284.5 L447.7,285.3 L451.2,285.9 L454.9,286.4 L458.6,286.6 L462.3,286.6 L466.1,286.3 L469.9,285.7 L473.7,284.8 L477.5,283.6 L481.2,282.1 L485.0,280.3 L488.6,278.1 L492.1,275.8 L495.4,273.3 L498.7,270.7 L501.9,268.1 L505.0,265.4 L508.0,262.8 L511.0,260.2 L513.9,257.7 L516.8,255.4 L519.6,253.3 L522.4,251.2 L525.2,249.4 L527.9,247.6 L530.6,246.0 L533.3,244.6 L536.0,243.2 L538.7,242.1 L541.3,241.0 L543.9,240.1 L546.5,239.3 L549.1,238.7 L551.6,238.2 L554.2,237.8 L556.7,237.6 L559.2,237.5 L561.7,237.5 L564.3,237.6 L566.9,237.9 L569.6,238.3 L572.3,238.8 L575.1,239.3 L577.9,240.0 L580.8,240.7 L583.7,241.4 L586.7,242.2 L589.7,243.1 L592.8,243.9 L595.9,244.7 L599.0,245.5 L602.2,246.3 L605.5,247.0 L608.8,247.7 L612.2,248.2 L615.6,248.7 L619.1,249.0 L622.6,249.1 L626.2,249.1 L629.8,248.8 L633.5,248.4 L637.0,247.7 L640.5,246.9 L643.8,246.0 L647.1,245.0 L650.3,244.0 L653.4,242.9 L656.4,241.9 L659.4,240.9 L662.2,240.0 L665.0,239.2 L667.8,238.5 L670.6,237.8 L673.3,237.2 L676.1,236.7 L678.8,236.3 L681.6,235.9 L684.3,235.7 L687.0,235.5 L689.7,235.4 L692.5,235.4 L695.2,235.5 L697.9,235.7 L700.6,235.9 L703.3,236.3 L706.0,236.7 L708.7,237.2 L711.4,237.9 L714.1,238.6 L716.8,239.4 L719.5,240.3 L722.3,241.3 L725.0,242.5 L727.7,243.7 L730.5,245.0 L733.3,246.5 L736.0,248.1 L738.8,249.7 L741.6,251.5 L744.4,253.4 L747.2,255.5 L750.0,257.6 L752.9,259.9 L755.7,262.3 L758.6,264.9 L761.4,267.5 L764.3,270.3 L767.2,273.3 L770.1,276.3 L773.0,279.5 L775.9,282.9 L778.8,286.4 L781.7,290.0 L784.6,293.8 L789.5,300.2 L794.3,306.5 L799.2,312.9" transform="translate(0,62.10)" stroke="#92D050" clip-path="url(#capclip)"/>
<path d="M188.7,165.1 L191.5,165.1 L194.4,165.1 L197.2,165.3 L200.1,165.4 L203.0,165.6 L205.8,165.9 L208.7,166.2 L211.6,166.5 L214.4,166.9 L217.3,167.4 L220.2,167.8 L223.1,168.4 L226.0,169.0 L228.9,169.6 L231.8,170.3 L234.6,171.0 L237.5,171.7 L240.5,172.5 L243.4,173.4 L246.3,174.3 L249.2,175.2 L252.1,176.2 L255.0,177.2 L257.9,178.2 L260.9,179.3 L263.8,180.5 L266.7,181.6 L269.7,182.8 L272.6,184.1 L275.5,185.4 L278.5,186.7 L281.4,188.1 L284.4,189.4 L287.3,190.9 L290.3,192.3 L293.2,193.8 L296.2,195.4 L299.2,196.9 L302.1,198.5 L305.1,200.2 L308.1,201.8 L311.0,203.5 L314.0,205.2 L317.0,207.0 L319.9,208.7 L322.9,210.5 L325.9,212.4 L328.9,214.2 L331.9,216.1 L334.9,218.0 L337.8,220.0 L340.8,221.9 L343.8,223.9 L346.8,225.9 L349.8,228.0 L352.8,230.0 L355.8,232.1 L358.8,234.2 L361.8,236.3 L364.8,238.4 L367.8,240.6 L370.8,242.8 L373.9,245.0 L376.9,247.2 L380.0,249.4 L383.0,251.6 L386.1,253.7 L389.2,255.9 L392.3,258.1 L395.4,260.2 L398.5,262.3 L401.6,264.3 L404.8,266.3 L408.0,268.3 L411.1,270.2 L414.3,272.0 L417.6,273.8 L420.8,275.4 L424.0,277.0 L427.3,278.6 L430.6,280.0 L434.0,281.3 L437.3,282.5 L440.7,283.6 L444.2,284.5 L447.7,285.3 L451.2,285.9 L454.9,286.4 L458.6,286.6 L462.3,286.6 L466.1,286.3 L469.9,285.7 L473.7,284.8 L477.5,283.6 L481.2,282.1 L485.0,280.3 L488.6,278.1 L492.1,275.8 L495.4,273.3 L498.7,270.7 L501.9,268.1 L505.0,265.4 L508.0,262.8 L511.0,260.2 L513.9,257.7 L516.8,255.4 L519.6,253.3 L522.4,251.2 L525.2,249.4 L527.9,247.6 L530.6,246.0 L533.3,244.6 L536.0,243.2 L538.7,242.1 L541.3,241.0 L543.9,240.1 L546.5,239.3 L549.1,238.7 L551.6,238.2 L554.2,237.8 L556.7,237.6 L559.2,237.5 L561.7,237.5 L564.3,237.6 L566.9,237.9 L569.6,238.3 L572.3,238.8 L575.1,239.3 L577.9,240.0 L580.8,240.7 L583.7,241.4 L586.7,242.2 L589.7,243.1 L592.8,243.9 L595.9,244.7 L599.0,245.5 L602.2,246.3 L605.5,247.0 L608.8,247.7 L612.2,248.2 L615.6,248.7 L619.1,249.0 L622.6,249.1 L626.2,249.1 L629.8,248.8 L633.5,248.4 L637.0,247.7 L640.5,246.9 L643.8,246.0 L647.1,245.0 L650.3,244.0 L653.4,242.9 L656.4,241.9 L659.4,240.9 L662.2,240.0 L665.0,239.2 L667.8,238.5 L670.6,237.8 L673.3,237.2 L676.1,236.7 L678.8,236.3 L681.6,235.9 L684.3,235.7 L687.0,235.5 L689.7,235.4 L692.5,235.4 L695.2,235.5 L697.9,235.7 L700.6,235.9 L703.3,236.3 L706.0,236.7 L708.7,237.2 L711.4,237.9 L714.1,238.6 L716.8,239.4 L719.5,240.3 L722.3,241.3 L725.0,242.5 L727.7,243.7 L730.5,245.0 L733.3,246.5 L736.0,248.1 L738.8,249.7 L741.6,251.5 L744.4,253.4 L747.2,255.5 L750.0,257.6 L752.9,259.9 L755.7,262.3 L758.6,264.9 L761.4,267.5 L764.3,270.3 L767.2,273.3 L770.1,276.3 L773.0,279.5 L775.9,282.9 L778.8,286.4 L781.7,290.0 L784.6,293.8 L789.5,300.2 L794.3,306.5 L799.2,312.9" transform="translate(0,82.80)" stroke="#00B050" clip-path="url(#capclip)"/>
<path d="M188.7,165.1 L191.5,165.1 L194.4,165.1 L197.2,165.3 L200.1,165.4 L203.0,165.6 L205.8,165.9 L208.7,166.2 L211.6,166.5 L214.4,166.9 L217.3,167.4 L220.2,167.8 L223.1,168.4 L226.0,169.0 L228.9,169.6 L231.8,170.3 L234.6,171.0 L237.5,171.7 L240.5,172.5 L243.4,173.4 L246.3,174.3 L249.2,175.2 L252.1,176.2 L255.0,177.2 L257.9,178.2 L260.9,179.3 L263.8,180.5 L266.7,181.6 L269.7,182.8 L272.6,184.1 L275.5,185.4 L278.5,186.7 L281.4,188.1 L284.4,189.4 L287.3,190.9 L290.3,192.3 L293.2,193.8 L296.2,195.4 L299.2,196.9 L302.1,198.5 L305.1,200.2 L308.1,201.8 L311.0,203.5 L314.0,205.2 L317.0,207.0 L319.9,208.7 L322.9,210.5 L325.9,212.4 L328.9,214.2 L331.9,216.1 L334.9,218.0 L337.8,220.0 L340.8,221.9 L343.8,223.9 L346.8,225.9 L349.8,228.0 L352.8,230.0 L355.8,232.1 L358.8,234.2 L361.8,236.3 L364.8,238.4 L367.8,240.6 L370.8,242.8 L373.9,245.0 L376.9,247.2 L380.0,249.4 L383.0,251.6 L386.1,253.7 L389.2,255.9 L392.3,258.1 L395.4,260.2 L398.5,262.3 L401.6,264.3 L404.8,266.3 L408.0,268.3 L411.1,270.2 L414.3,272.0 L417.6,273.8 L420.8,275.4 L424.0,277.0 L427.3,278.6 L430.6,280.0 L434.0,281.3 L437.3,282.5 L440.7,283.6 L444.2,284.5 L447.7,285.3 L451.2,285.9 L454.9,286.4 L458.6,286.6 L462.3,286.6 L466.1,286.3 L469.9,285.7 L473.7,284.8 L477.5,283.6 L481.2,282.1 L485.0,280.3 L488.6,278.1 L492.1,275.8 L495.4,273.3 L498.7,270.7 L501.9,268.1 L505.0,265.4 L508.0,262.8 L511.0,260.2 L513.9,257.7 L516.8,255.4 L519.6,253.3 L522.4,251.2 L525.2,249.4 L527.9,247.6 L530.6,246.0 L533.3,244.6 L536.0,243.2 L538.7,242.1 L541.3,241.0 L543.9,240.1 L546.5,239.3 L549.1,238.7 L551.6,238.2 L554.2,237.8 L556.7,237.6 L559.2,237.5 L561.7,237.5 L564.3,237.6 L566.9,237.9 L569.6,238.3 L572.3,238.8 L575.1,239.3 L577.9,240.0 L580.8,240.7 L583.7,241.4 L586.7,242.2 L589.7,243.1 L592.8,243.9 L595.9,244.7 L599.0,245.5 L602.2,246.3 L605.5,247.0 L608.8,247.7 L612.2,248.2 L615.6,248.7 L619.1,249.0 L622.6,249.1 L626.2,249.1 L629.8,248.8 L633.5,248.4 L637.0,247.7 L640.5,246.9 L643.8,246.0 L647.1,245.0 L650.3,244.0 L653.4,242.9 L656.4,241.9 L659.4,240.9 L662.2,240.0 L665.0,239.2 L667.8,238.5 L670.6,237.8 L673.3,237.2 L676.1,236.7 L678.8,236.3 L681.6,235.9 L684.3,235.7 L687.0,235.5 L689.7,235.4 L692.5,235.4 L695.2,235.5 L697.9,235.7 L700.6,235.9 L703.3,236.3 L706.0,236.7 L708.7,237.2 L711.4,237.9 L714.1,238.6 L716.8,239.4 L719.5,240.3 L722.3,241.3 L725.0,242.5 L727.7,243.7 L730.5,245.0 L733.3,246.5 L736.0,248.1 L738.8,249.7 L741.6,251.5 L744.4,253.4 L747.2,255.5 L750.0,257.6 L752.9,259.9 L755.7,262.3 L758.6,264.9 L761.4,267.5 L764.3,270.3 L767.2,273.3 L770.1,276.3 L773.0,279.5 L775.9,282.9 L778.8,286.4 L781.7,290.0 L784.6,293.8 L789.5,300.2 L794.3,306.5 L799.2,312.9" transform="translate(0,103.50)" stroke="#00B0F0" clip-path="url(#capclip)"/>
<path d="M188.7,165.1 L191.5,165.1 L194.4,165.1 L197.2,165.3 L200.1,165.4 L203.0,165.6 L205.8,165.9 L208.7,166.2 L211.6,166.5 L214.4,166.9 L217.3,167.4 L220.2,167.8 L223.1,168.4 L226.0,169.0 L228.9,169.6 L231.8,170.3 L234.6,171.0 L237.5,171.7 L240.5,172.5 L243.4,173.4 L246.3,174.3 L249.2,175.2 L252.1,176.2 L255.0,177.2 L257.9,178.2 L260.9,179.3 L263.8,180.5 L266.7,181.6 L269.7,182.8 L272.6,184.1 L275.5,185.4 L278.5,186.7 L281.4,188.1 L284.4,189.4 L287.3,190.9 L290.3,192.3 L293.2,193.8 L296.2,195.4 L299.2,196.9 L302.1,198.5 L305.1,200.2 L308.1,201.8 L311.0,203.5 L314.0,205.2 L317.0,207.0 L319.9,208.7 L322.9,210.5 L325.9,212.4 L328.9,214.2 L331.9,216.1 L334.9,218.0 L337.8,220.0 L340.8,221.9 L343.8,223.9 L346.8,225.9 L349.8,228.0 L352.8,230.0 L355.8,232.1 L358.8,234.2 L361.8,236.3 L364.8,238.4 L367.8,240.6 L370.8,242.8 L373.9,245.0 L376.9,247.2 L380.0,249.4 L383.0,251.6 L386.1,253.7 L389.2,255.9 L392.3,258.1 L395.4,260.2 L398.5,262.3 L401.6,264.3 L404.8,266.3 L408.0,268.3 L411.1,270.2 L414.3,272.0 L417.6,273.8 L420.8,275.4 L424.0,277.0 L427.3,278.6 L430.6,280.0 L434.0,281.3 L437.3,282.5 L440.7,283.6 L444.2,284.5 L447.7,285.3 L451.2,285.9 L454.9,286.4 L458.6,286.6 L462.3,286.6 L466.1,286.3 L469.9,285.7 L473.7,284.8 L477.5,283.6 L481.2,282.1 L485.0,280.3 L488.6,278.1 L492.1,275.8 L495.4,273.3 L498.7,270.7 L501.9,268.1 L505.0,265.4 L508.0,262.8 L511.0,260.2 L513.9,257.7 L516.8,255.4 L519.6,253.3 L522.4,251.2 L525.2,249.4 L527.9,247.6 L530.6,246.0 L533.3,244.6 L536.0,243.2 L538.7,242.1 L541.3,241.0 L543.9,240.1 L546.5,239.3 L549.1,238.7 L551.6,238.2 L554.2,237.8 L556.7,237.6 L559.2,237.5 L561.7,237.5 L564.3,237.6 L566.9,237.9 L569.6,238.3 L572.3,238.8 L575.1,239.3 L577.9,240.0 L580.8,240.7 L583.7,241.4 L586.7,242.2 L589.7,243.1 L592.8,243.9 L595.9,244.7 L599.0,245.5 L602.2,246.3 L605.5,247.0 L608.8,247.7 L612.2,248.2 L615.6,248.7 L619.1,249.0 L622.6,249.1 L626.2,249.1 L629.8,248.8 L633.5,248.4 L637.0,247.7 L640.5,246.9 L643.8,246.0 L647.1,245.0 L650.3,244.0 L653.4,242.9 L656.4,241.9 L659.4,240.9 L662.2,240.0 L665.0,239.2 L667.8,238.5 L670.6,237.8 L673.3,237.2 L676.1,236.7 L678.8,236.3 L681.6,235.9 L684.3,235.7 L687.0,235.5 L689.7,235.4 L692.5,235.4 L695.2,235.5 L697.9,235.7 L700.6,235.9 L703.3,236.3 L706.0,236.7 L708.7,237.2 L711.4,237.9 L714.1,238.6 L716.8,239.4 L719.5,240.3 L722.3,241.3 L725.0,242.5 L727.7,243.7 L730.5,245.0 L733.3,246.5 L736.0,248.1 L738.8,249.7 L741.6,251.5 L744.4,253.4 L747.2,255.5 L750.0,257.6 L752.9,259.9 L755.7,262.3 L758.6,264.9 L761.4,267.5 L764.3,270.3 L767.2,273.3 L770.1,276.3 L773.0,279.5 L775.9,282.9 L778.8,286.4 L781.7,290.0 L784.6,293.8 L789.5,300.2 L794.3,306.5 L799.2,312.9" transform="translate(0,124.20)" stroke="#7030A0" clip-path="url(#capclip)"/></g></g>
<rect x="151" y="113.6" width="680" height="382.4" fill="#fff"/>
<g fill="none" stroke-width="20.5" stroke-linecap="butt" stroke-linejoin="round">
<path d="M188.7,165.1 L191.5,165.1 L194.4,165.1 L197.2,165.3 L200.1,165.4 L203.0,165.6 L205.8,165.9 L208.7,166.2 L211.6,166.5 L214.4,166.9 L217.3,167.4 L220.2,167.8 L223.1,168.4 L226.0,169.0 L228.9,169.6 L231.8,170.3 L234.6,171.0 L237.5,171.7 L240.5,172.5 L243.4,173.4 L246.3,174.3 L249.2,175.2 L252.1,176.2 L255.0,177.2 L257.9,178.2 L260.9,179.3 L263.8,180.5 L266.7,181.6 L269.7,182.8 L272.6,184.1 L275.5,185.4 L278.5,186.7 L281.4,188.1 L284.4,189.4 L287.3,190.9 L290.3,192.3 L293.2,193.8 L296.2,195.4 L299.2,196.9 L302.1,198.5 L305.1,200.2 L308.1,201.8 L311.0,203.5 L314.0,205.2 L317.0,207.0 L319.9,208.7 L322.9,210.5 L325.9,212.4 L328.9,214.2 L331.9,216.1 L334.9,218.0 L337.8,220.0 L340.8,221.9 L343.8,223.9 L346.8,225.9 L349.8,228.0 L352.8,230.0 L355.8,232.1 L358.8,234.2 L361.8,236.3 L364.8,238.4 L367.8,240.6 L370.8,242.8 L373.9,245.0 L376.9,247.2 L380.0,249.4 L383.0,251.6 L386.1,253.7 L389.2,255.9 L392.3,258.1 L395.4,260.2 L398.5,262.3 L401.6,264.3 L404.8,266.3 L408.0,268.3 L411.1,270.2 L414.3,272.0 L417.6,273.8 L420.8,275.4 L424.0,277.0 L427.3,278.6 L430.6,280.0 L434.0,281.3 L437.3,282.5 L440.7,283.6 L444.2,284.5 L447.7,285.3 L451.2,285.9 L454.9,286.4 L458.6,286.6 L462.3,286.6 L466.1,286.3 L469.9,285.7 L473.7,284.8 L477.5,283.6 L481.2,282.1 L485.0,280.3 L488.6,278.1 L492.1,275.8 L495.4,273.3 L498.7,270.7 L501.9,268.1 L505.0,265.4 L508.0,262.8 L511.0,260.2 L513.9,257.7 L516.8,255.4 L519.6,253.3 L522.4,251.2 L525.2,249.4 L527.9,247.6 L530.6,246.0 L533.3,244.6 L536.0,243.2 L538.7,242.1 L541.3,241.0 L543.9,240.1 L546.5,239.3 L549.1,238.7 L551.6,238.2 L554.2,237.8 L556.7,237.6 L559.2,237.5 L561.7,237.5 L564.3,237.6 L566.9,237.9 L569.6,238.3 L572.3,238.8 L575.1,239.3 L577.9,240.0 L580.8,240.7 L583.7,241.4 L586.7,242.2 L589.7,243.1 L592.8,243.9 L595.9,244.7 L599.0,245.5 L602.2,246.3 L605.5,247.0 L608.8,247.7 L612.2,248.2 L615.6,248.7 L619.1,249.0 L622.6,249.1 L626.2,249.1 L629.8,248.8 L633.5,248.4 L637.0,247.7 L640.5,246.9 L643.8,246.0 L647.1,245.0 L650.3,244.0 L653.4,242.9 L656.4,241.9 L659.4,240.9 L662.2,240.0 L665.0,239.2 L667.8,238.5 L670.6,237.8 L673.3,237.2 L676.1,236.7 L678.8,236.3 L681.6,235.9 L684.3,235.7 L687.0,235.5 L689.7,235.4 L692.5,235.4 L695.2,235.5 L697.9,235.7 L700.6,235.9 L703.3,236.3 L706.0,236.7 L708.7,237.2 L711.4,237.9 L714.1,238.6 L716.8,239.4 L719.5,240.3 L722.3,241.3 L725.0,242.5 L727.7,243.7 L730.5,245.0 L733.3,246.5 L736.0,248.1 L738.8,249.7 L741.6,251.5 L744.4,253.4 L747.2,255.5 L750.0,257.6 L752.9,259.9 L755.7,262.3 L758.6,264.9 L761.4,267.5 L764.3,270.3 L767.2,273.3 L770.1,276.3 L773.0,279.5 L775.9,282.9 L778.8,286.4 L781.7,290.0 L784.6,293.8 L789.5,300.2 L794.3,306.5 L799.2,312.9" transform="translate(0,0.00)" stroke="#FF0000" clip-path="url(#capclip)"/>
<path d="M188.7,165.1 L191.5,165.1 L194.4,165.1 L197.2,165.3 L200.1,165.4 L203.0,165.6 L205.8,165.9 L208.7,166.2 L211.6,166.5 L214.4,166.9 L217.3,167.4 L220.2,167.8 L223.1,168.4 L226.0,169.0 L228.9,169.6 L231.8,170.3 L234.6,171.0 L237.5,171.7 L240.5,172.5 L243.4,173.4 L246.3,174.3 L249.2,175.2 L252.1,176.2 L255.0,177.2 L257.9,178.2 L260.9,179.3 L263.8,180.5 L266.7,181.6 L269.7,182.8 L272.6,184.1 L275.5,185.4 L278.5,186.7 L281.4,188.1 L284.4,189.4 L287.3,190.9 L290.3,192.3 L293.2,193.8 L296.2,195.4 L299.2,196.9 L302.1,198.5 L305.1,200.2 L308.1,201.8 L311.0,203.5 L314.0,205.2 L317.0,207.0 L319.9,208.7 L322.9,210.5 L325.9,212.4 L328.9,214.2 L331.9,216.1 L334.9,218.0 L337.8,220.0 L340.8,221.9 L343.8,223.9 L346.8,225.9 L349.8,228.0 L352.8,230.0 L355.8,232.1 L358.8,234.2 L361.8,236.3 L364.8,238.4 L367.8,240.6 L370.8,242.8 L373.9,245.0 L376.9,247.2 L380.0,249.4 L383.0,251.6 L386.1,253.7 L389.2,255.9 L392.3,258.1 L395.4,260.2 L398.5,262.3 L401.6,264.3 L404.8,266.3 L408.0,268.3 L411.1,270.2 L414.3,272.0 L417.6,273.8 L420.8,275.4 L424.0,277.0 L427.3,278.6 L430.6,280.0 L434.0,281.3 L437.3,282.5 L440.7,283.6 L444.2,284.5 L447.7,285.3 L451.2,285.9 L454.9,286.4 L458.6,286.6 L462.3,286.6 L466.1,286.3 L469.9,285.7 L473.7,284.8 L477.5,283.6 L481.2,282.1 L485.0,280.3 L488.6,278.1 L492.1,275.8 L495.4,273.3 L498.7,270.7 L501.9,268.1 L505.0,265.4 L508.0,262.8 L511.0,260.2 L513.9,257.7 L516.8,255.4 L519.6,253.3 L522.4,251.2 L525.2,249.4 L527.9,247.6 L530.6,246.0 L533.3,244.6 L536.0,243.2 L538.7,242.1 L541.3,241.0 L543.9,240.1 L546.5,239.3 L549.1,238.7 L551.6,238.2 L554.2,237.8 L556.7,237.6 L559.2,237.5 L561.7,237.5 L564.3,237.6 L566.9,237.9 L569.6,238.3 L572.3,238.8 L575.1,239.3 L577.9,240.0 L580.8,240.7 L583.7,241.4 L586.7,242.2 L589.7,243.1 L592.8,243.9 L595.9,244.7 L599.0,245.5 L602.2,246.3 L605.5,247.0 L608.8,247.7 L612.2,248.2 L615.6,248.7 L619.1,249.0 L622.6,249.1 L626.2,249.1 L629.8,248.8 L633.5,248.4 L637.0,247.7 L640.5,246.9 L643.8,246.0 L647.1,245.0 L650.3,244.0 L653.4,242.9 L656.4,241.9 L659.4,240.9 L662.2,240.0 L665.0,239.2 L667.8,238.5 L670.6,237.8 L673.3,237.2 L676.1,236.7 L678.8,236.3 L681.6,235.9 L684.3,235.7 L687.0,235.5 L689.7,235.4 L692.5,235.4 L695.2,235.5 L697.9,235.7 L700.6,235.9 L703.3,236.3 L706.0,236.7 L708.7,237.2 L711.4,237.9 L714.1,238.6 L716.8,239.4 L719.5,240.3 L722.3,241.3 L725.0,242.5 L727.7,243.7 L730.5,245.0 L733.3,246.5 L736.0,248.1 L738.8,249.7 L741.6,251.5 L744.4,253.4 L747.2,255.5 L750.0,257.6 L752.9,259.9 L755.7,262.3 L758.6,264.9 L761.4,267.5 L764.3,270.3 L767.2,273.3 L770.1,276.3 L773.0,279.5 L775.9,282.9 L778.8,286.4 L781.7,290.0 L784.6,293.8 L789.5,300.2 L794.3,306.5 L799.2,312.9" transform="translate(0,20.70)" stroke="#FFC000" clip-path="url(#capclip)"/>
<path d="M188.7,165.1 L191.5,165.1 L194.4,165.1 L197.2,165.3 L200.1,165.4 L203.0,165.6 L205.8,165.9 L208.7,166.2 L211.6,166.5 L214.4,166.9 L217.3,167.4 L220.2,167.8 L223.1,168.4 L226.0,169.0 L228.9,169.6 L231.8,170.3 L234.6,171.0 L237.5,171.7 L240.5,172.5 L243.4,173.4 L246.3,174.3 L249.2,175.2 L252.1,176.2 L255.0,177.2 L257.9,178.2 L260.9,179.3 L263.8,180.5 L266.7,181.6 L269.7,182.8 L272.6,184.1 L275.5,185.4 L278.5,186.7 L281.4,188.1 L284.4,189.4 L287.3,190.9 L290.3,192.3 L293.2,193.8 L296.2,195.4 L299.2,196.9 L302.1,198.5 L305.1,200.2 L308.1,201.8 L311.0,203.5 L314.0,205.2 L317.0,207.0 L319.9,208.7 L322.9,210.5 L325.9,212.4 L328.9,214.2 L331.9,216.1 L334.9,218.0 L337.8,220.0 L340.8,221.9 L343.8,223.9 L346.8,225.9 L349.8,228.0 L352.8,230.0 L355.8,232.1 L358.8,234.2 L361.8,236.3 L364.8,238.4 L367.8,240.6 L370.8,242.8 L373.9,245.0 L376.9,247.2 L380.0,249.4 L383.0,251.6 L386.1,253.7 L389.2,255.9 L392.3,258.1 L395.4,260.2 L398.5,262.3 L401.6,264.3 L404.8,266.3 L408.0,268.3 L411.1,270.2 L414.3,272.0 L417.6,273.8 L420.8,275.4 L424.0,277.0 L427.3,278.6 L430.6,280.0 L434.0,281.3 L437.3,282.5 L440.7,283.6 L444.2,284.5 L447.7,285.3 L451.2,285.9 L454.9,286.4 L458.6,286.6 L462.3,286.6 L466.1,286.3 L469.9,285.7 L473.7,284.8 L477.5,283.6 L481.2,282.1 L485.0,280.3 L488.6,278.1 L492.1,275.8 L495.4,273.3 L498.7,270.7 L501.9,268.1 L505.0,265.4 L508.0,262.8 L511.0,260.2 L513.9,257.7 L516.8,255.4 L519.6,253.3 L522.4,251.2 L525.2,249.4 L527.9,247.6 L530.6,246.0 L533.3,244.6 L536.0,243.2 L538.7,242.1 L541.3,241.0 L543.9,240.1 L546.5,239.3 L549.1,238.7 L551.6,238.2 L554.2,237.8 L556.7,237.6 L559.2,237.5 L561.7,237.5 L564.3,237.6 L566.9,237.9 L569.6,238.3 L572.3,238.8 L575.1,239.3 L577.9,240.0 L580.8,240.7 L583.7,241.4 L586.7,242.2 L589.7,243.1 L592.8,243.9 L595.9,244.7 L599.0,245.5 L602.2,246.3 L605.5,247.0 L608.8,247.7 L612.2,248.2 L615.6,248.7 L619.1,249.0 L622.6,249.1 L626.2,249.1 L629.8,248.8 L633.5,248.4 L637.0,247.7 L640.5,246.9 L643.8,246.0 L647.1,245.0 L650.3,244.0 L653.4,242.9 L656.4,241.9 L659.4,240.9 L662.2,240.0 L665.0,239.2 L667.8,238.5 L670.6,237.8 L673.3,237.2 L676.1,236.7 L678.8,236.3 L681.6,235.9 L684.3,235.7 L687.0,235.5 L689.7,235.4 L692.5,235.4 L695.2,235.5 L697.9,235.7 L700.6,235.9 L703.3,236.3 L706.0,236.7 L708.7,237.2 L711.4,237.9 L714.1,238.6 L716.8,239.4 L719.5,240.3 L722.3,241.3 L725.0,242.5 L727.7,243.7 L730.5,245.0 L733.3,246.5 L736.0,248.1 L738.8,249.7 L741.6,251.5 L744.4,253.4 L747.2,255.5 L750.0,257.6 L752.9,259.9 L755.7,262.3 L758.6,264.9 L761.4,267.5 L764.3,270.3 L767.2,273.3 L770.1,276.3 L773.0,279.5 L775.9,282.9 L778.8,286.4 L781.7,290.0 L784.6,293.8 L789.5,300.2 L794.3,306.5 L799.2,312.9" transform="translate(0,41.40)" stroke="#FFFF00" clip-path="url(#capclip)"/>
<path d="M188.7,165.1 L191.5,165.1 L194.4,165.1 L197.2,165.3 L200.1,165.4 L203.0,165.6 L205.8,165.9 L208.7,166.2 L211.6,166.5 L214.4,166.9 L217.3,167.4 L220.2,167.8 L223.1,168.4 L226.0,169.0 L228.9,169.6 L231.8,170.3 L234.6,171.0 L237.5,171.7 L240.5,172.5 L243.4,173.4 L246.3,174.3 L249.2,175.2 L252.1,176.2 L255.0,177.2 L257.9,178.2 L260.9,179.3 L263.8,180.5 L266.7,181.6 L269.7,182.8 L272.6,184.1 L275.5,185.4 L278.5,186.7 L281.4,188.1 L284.4,189.4 L287.3,190.9 L290.3,192.3 L293.2,193.8 L296.2,195.4 L299.2,196.9 L302.1,198.5 L305.1,200.2 L308.1,201.8 L311.0,203.5 L314.0,205.2 L317.0,207.0 L319.9,208.7 L322.9,210.5 L325.9,212.4 L328.9,214.2 L331.9,216.1 L334.9,218.0 L337.8,220.0 L340.8,221.9 L343.8,223.9 L346.8,225.9 L349.8,228.0 L352.8,230.0 L355.8,232.1 L358.8,234.2 L361.8,236.3 L364.8,238.4 L367.8,240.6 L370.8,242.8 L373.9,245.0 L376.9,247.2 L380.0,249.4 L383.0,251.6 L386.1,253.7 L389.2,255.9 L392.3,258.1 L395.4,260.2 L398.5,262.3 L401.6,264.3 L404.8,266.3 L408.0,268.3 L411.1,270.2 L414.3,272.0 L417.6,273.8 L420.8,275.4 L424.0,277.0 L427.3,278.6 L430.6,280.0 L434.0,281.3 L437.3,282.5 L440.7,283.6 L444.2,284.5 L447.7,285.3 L451.2,285.9 L454.9,286.4 L458.6,286.6 L462.3,286.6 L466.1,286.3 L469.9,285.7 L473.7,284.8 L477.5,283.6 L481.2,282.1 L485.0,280.3 L488.6,278.1 L492.1,275.8 L495.4,273.3 L498.7,270.7 L501.9,268.1 L505.0,265.4 L508.0,262.8 L511.0,260.2 L513.9,257.7 L516.8,255.4 L519.6,253.3 L522.4,251.2 L525.2,249.4 L527.9,247.6 L530.6,246.0 L533.3,244.6 L536.0,243.2 L538.7,242.1 L541.3,241.0 L543.9,240.1 L546.5,239.3 L549.1,238.7 L551.6,238.2 L554.2,237.8 L556.7,237.6 L559.2,237.5 L561.7,237.5 L564.3,237.6 L566.9,237.9 L569.6,238.3 L572.3,238.8 L575.1,239.3 L577.9,240.0 L580.8,240.7 L583.7,241.4 L586.7,242.2 L589.7,243.1 L592.8,243.9 L595.9,244.7 L599.0,245.5 L602.2,246.3 L605.5,247.0 L608.8,247.7 L612.2,248.2 L615.6,248.7 L619.1,249.0 L622.6,249.1 L626.2,249.1 L629.8,248.8 L633.5,248.4 L637.0,247.7 L640.5,246.9 L643.8,246.0 L647.1,245.0 L650.3,244.0 L653.4,242.9 L656.4,241.9 L659.4,240.9 L662.2,240.0 L665.0,239.2 L667.8,238.5 L670.6,237.8 L673.3,237.2 L676.1,236.7 L678.8,236.3 L681.6,235.9 L684.3,235.7 L687.0,235.5 L689.7,235.4 L692.5,235.4 L695.2,235.5 L697.9,235.7 L700.6,235.9 L703.3,236.3 L706.0,236.7 L708.7,237.2 L711.4,237.9 L714.1,238.6 L716.8,239.4 L719.5,240.3 L722.3,241.3 L725.0,242.5 L727.7,243.7 L730.5,245.0 L733.3,246.5 L736.0,248.1 L738.8,249.7 L741.6,251.5 L744.4,253.4 L747.2,255.5 L750.0,257.6 L752.9,259.9 L755.7,262.3 L758.6,264.9 L761.4,267.5 L764.3,270.3 L767.2,273.3 L770.1,276.3 L773.0,279.5 L775.9,282.9 L778.8,286.4 L781.7,290.0 L784.6,293.8 L789.5,300.2 L794.3,306.5 L799.2,312.9" transform="translate(0,62.10)" stroke="#92D050" clip-path="url(#capclip)"/>
<path d="M188.7,165.1 L191.5,165.1 L194.4,165.1 L197.2,165.3 L200.1,165.4 L203.0,165.6 L205.8,165.9 L208.7,166.2 L211.6,166.5 L214.4,166.9 L217.3,167.4 L220.2,167.8 L223.1,168.4 L226.0,169.0 L228.9,169.6 L231.8,170.3 L234.6,171.0 L237.5,171.7 L240.5,172.5 L243.4,173.4 L246.3,174.3 L249.2,175.2 L252.1,176.2 L255.0,177.2 L257.9,178.2 L260.9,179.3 L263.8,180.5 L266.7,181.6 L269.7,182.8 L272.6,184.1 L275.5,185.4 L278.5,186.7 L281.4,188.1 L284.4,189.4 L287.3,190.9 L290.3,192.3 L293.2,193.8 L296.2,195.4 L299.2,196.9 L302.1,198.5 L305.1,200.2 L308.1,201.8 L311.0,203.5 L314.0,205.2 L317.0,207.0 L319.9,208.7 L322.9,210.5 L325.9,212.4 L328.9,214.2 L331.9,216.1 L334.9,218.0 L337.8,220.0 L340.8,221.9 L343.8,223.9 L346.8,225.9 L349.8,228.0 L352.8,230.0 L355.8,232.1 L358.8,234.2 L361.8,236.3 L364.8,238.4 L367.8,240.6 L370.8,242.8 L373.9,245.0 L376.9,247.2 L380.0,249.4 L383.0,251.6 L386.1,253.7 L389.2,255.9 L392.3,258.1 L395.4,260.2 L398.5,262.3 L401.6,264.3 L404.8,266.3 L408.0,268.3 L411.1,270.2 L414.3,272.0 L417.6,273.8 L420.8,275.4 L424.0,277.0 L427.3,278.6 L430.6,280.0 L434.0,281.3 L437.3,282.5 L440.7,283.6 L444.2,284.5 L447.7,285.3 L451.2,285.9 L454.9,286.4 L458.6,286.6 L462.3,286.6 L466.1,286.3 L469.9,285.7 L473.7,284.8 L477.5,283.6 L481.2,282.1 L485.0,280.3 L488.6,278.1 L492.1,275.8 L495.4,273.3 L498.7,270.7 L501.9,268.1 L505.0,265.4 L508.0,262.8 L511.0,260.2 L513.9,257.7 L516.8,255.4 L519.6,253.3 L522.4,251.2 L525.2,249.4 L527.9,247.6 L530.6,246.0 L533.3,244.6 L536.0,243.2 L538.7,242.1 L541.3,241.0 L543.9,240.1 L546.5,239.3 L549.1,238.7 L551.6,238.2 L554.2,237.8 L556.7,237.6 L559.2,237.5 L561.7,237.5 L564.3,237.6 L566.9,237.9 L569.6,238.3 L572.3,238.8 L575.1,239.3 L577.9,240.0 L580.8,240.7 L583.7,241.4 L586.7,242.2 L589.7,243.1 L592.8,243.9 L595.9,244.7 L599.0,245.5 L602.2,246.3 L605.5,247.0 L608.8,247.7 L612.2,248.2 L615.6,248.7 L619.1,249.0 L622.6,249.1 L626.2,249.1 L629.8,248.8 L633.5,248.4 L637.0,247.7 L640.5,246.9 L643.8,246.0 L647.1,245.0 L650.3,244.0 L653.4,242.9 L656.4,241.9 L659.4,240.9 L662.2,240.0 L665.0,239.2 L667.8,238.5 L670.6,237.8 L673.3,237.2 L676.1,236.7 L678.8,236.3 L681.6,235.9 L684.3,235.7 L687.0,235.5 L689.7,235.4 L692.5,235.4 L695.2,235.5 L697.9,235.7 L700.6,235.9 L703.3,236.3 L706.0,236.7 L708.7,237.2 L711.4,237.9 L714.1,238.6 L716.8,239.4 L719.5,240.3 L722.3,241.3 L725.0,242.5 L727.7,243.7 L730.5,245.0 L733.3,246.5 L736.0,248.1 L738.8,249.7 L741.6,251.5 L744.4,253.4 L747.2,255.5 L750.0,257.6 L752.9,259.9 L755.7,262.3 L758.6,264.9 L761.4,267.5 L764.3,270.3 L767.2,273.3 L770.1,276.3 L773.0,279.5 L775.9,282.9 L778.8,286.4 L781.7,290.0 L784.6,293.8 L789.5,300.2 L794.3,306.5 L799.2,312.9" transform="translate(0,82.80)" stroke="#00B050" clip-path="url(#capclip)"/>
<path d="M188.7,165.1 L191.5,165.1 L194.4,165.1 L197.2,165.3 L200.1,165.4 L203.0,165.6 L205.8,165.9 L208.7,166.2 L211.6,166.5 L214.4,166.9 L217.3,167.4 L220.2,167.8 L223.1,168.4 L226.0,169.0 L228.9,169.6 L231.8,170.3 L234.6,171.0 L237.5,171.7 L240.5,172.5 L243.4,173.4 L246.3,174.3 L249.2,175.2 L252.1,176.2 L255.0,177.2 L257.9,178.2 L260.9,179.3 L263.8,180.5 L266.7,181.6 L269.7,182.8 L272.6,184.1 L275.5,185.4 L278.5,186.7 L281.4,188.1 L284.4,189.4 L287.3,190.9 L290.3,192.3 L293.2,193.8 L296.2,195.4 L299.2,196.9 L302.1,198.5 L305.1,200.2 L308.1,201.8 L311.0,203.5 L314.0,205.2 L317.0,207.0 L319.9,208.7 L322.9,210.5 L325.9,212.4 L328.9,214.2 L331.9,216.1 L334.9,218.0 L337.8,220.0 L340.8,221.9 L343.8,223.9 L346.8,225.9 L349.8,228.0 L352.8,230.0 L355.8,232.1 L358.8,234.2 L361.8,236.3 L364.8,238.4 L367.8,240.6 L370.8,242.8 L373.9,245.0 L376.9,247.2 L380.0,249.4 L383.0,251.6 L386.1,253.7 L389.2,255.9 L392.3,258.1 L395.4,260.2 L398.5,262.3 L401.6,264.3 L404.8,266.3 L408.0,268.3 L411.1,270.2 L414.3,272.0 L417.6,273.8 L420.8,275.4 L424.0,277.0 L427.3,278.6 L430.6,280.0 L434.0,281.3 L437.3,282.5 L440.7,283.6 L444.2,284.5 L447.7,285.3 L451.2,285.9 L454.9,286.4 L458.6,286.6 L462.3,286.6 L466.1,286.3 L469.9,285.7 L473.7,284.8 L477.5,283.6 L481.2,282.1 L485.0,280.3 L488.6,278.1 L492.1,275.8 L495.4,273.3 L498.7,270.7 L501.9,268.1 L505.0,265.4 L508.0,262.8 L511.0,260.2 L513.9,257.7 L516.8,255.4 L519.6,253.3 L522.4,251.2 L525.2,249.4 L527.9,247.6 L530.6,246.0 L533.3,244.6 L536.0,243.2 L538.7,242.1 L541.3,241.0 L543.9,240.1 L546.5,239.3 L549.1,238.7 L551.6,238.2 L554.2,237.8 L556.7,237.6 L559.2,237.5 L561.7,237.5 L564.3,237.6 L566.9,237.9 L569.6,238.3 L572.3,238.8 L575.1,239.3 L577.9,240.0 L580.8,240.7 L583.7,241.4 L586.7,242.2 L589.7,243.1 L592.8,243.9 L595.9,244.7 L599.0,245.5 L602.2,246.3 L605.5,247.0 L608.8,247.7 L612.2,248.2 L615.6,248.7 L619.1,249.0 L622.6,249.1 L626.2,249.1 L629.8,248.8 L633.5,248.4 L637.0,247.7 L640.5,246.9 L643.8,246.0 L647.1,245.0 L650.3,244.0 L653.4,242.9 L656.4,241.9 L659.4,240.9 L662.2,240.0 L665.0,239.2 L667.8,238.5 L670.6,237.8 L673.3,237.2 L676.1,236.7 L678.8,236.3 L681.6,235.9 L684.3,235.7 L687.0,235.5 L689.7,235.4 L692.5,235.4 L695.2,235.5 L697.9,235.7 L700.6,235.9 L703.3,236.3 L706.0,236.7 L708.7,237.2 L711.4,237.9 L714.1,238.6 L716.8,239.4 L719.5,240.3 L722.3,241.3 L725.0,242.5 L727.7,243.7 L730.5,245.0 L733.3,246.5 L736.0,248.1 L738.8,249.7 L741.6,251.5 L744.4,253.4 L747.2,255.5 L750.0,257.6 L752.9,259.9 L755.7,262.3 L758.6,264.9 L761.4,267.5 L764.3,270.3 L767.2,273.3 L770.1,276.3 L773.0,279.5 L775.9,282.9 L778.8,286.4 L781.7,290.0 L784.6,293.8 L789.5,300.2 L794.3,306.5 L799.2,312.9" transform="translate(0,103.50)" stroke="#00B0F0" clip-path="url(#capclip)"/>
<path d="M188.7,165.1 L191.5,165.1 L194.4,165.1 L197.2,165.3 L200.1,165.4 L203.0,165.6 L205.8,165.9 L208.7,166.2 L211.6,166.5 L214.4,166.9 L217.3,167.4 L220.2,167.8 L223.1,168.4 L226.0,169.0 L228.9,169.6 L231.8,170.3 L234.6,171.0 L237.5,171.7 L240.5,172.5 L243.4,173.4 L246.3,174.3 L249.2,175.2 L252.1,176.2 L255.0,177.2 L257.9,178.2 L260.9,179.3 L263.8,180.5 L266.7,181.6 L269.7,182.8 L272.6,184.1 L275.5,185.4 L278.5,186.7 L281.4,188.1 L284.4,189.4 L287.3,190.9 L290.3,192.3 L293.2,193.8 L296.2,195.4 L299.2,196.9 L302.1,198.5 L305.1,200.2 L308.1,201.8 L311.0,203.5 L314.0,205.2 L317.0,207.0 L319.9,208.7 L322.9,210.5 L325.9,212.4 L328.9,214.2 L331.9,216.1 L334.9,218.0 L337.8,220.0 L340.8,221.9 L343.8,223.9 L346.8,225.9 L349.8,228.0 L352.8,230.0 L355.8,232.1 L358.8,234.2 L361.8,236.3 L364.8,238.4 L367.8,240.6 L370.8,242.8 L373.9,245.0 L376.9,247.2 L380.0,249.4 L383.0,251.6 L386.1,253.7 L389.2,255.9 L392.3,258.1 L395.4,260.2 L398.5,262.3 L401.6,264.3 L404.8,266.3 L408.0,268.3 L411.1,270.2 L414.3,272.0 L417.6,273.8 L420.8,275.4 L424.0,277.0 L427.3,278.6 L430.6,280.0 L434.0,281.3 L437.3,282.5 L440.7,283.6 L444.2,284.5 L447.7,285.3 L451.2,285.9 L454.9,286.4 L458.6,286.6 L462.3,286.6 L466.1,286.3 L469.9,285.7 L473.7,284.8 L477.5,283.6 L481.2,282.1 L485.0,280.3 L488.6,278.1 L492.1,275.8 L495.4,273.3 L498.7,270.7 L501.9,268.1 L505.0,265.4 L508.0,262.8 L511.0,260.2 L513.9,257.7 L516.8,255.4 L519.6,253.3 L522.4,251.2 L525.2,249.4 L527.9,247.6 L530.6,246.0 L533.3,244.6 L536.0,243.2 L538.7,242.1 L541.3,241.0 L543.9,240.1 L546.5,239.3 L549.1,238.7 L551.6,238.2 L554.2,237.8 L556.7,237.6 L559.2,237.5 L561.7,237.5 L564.3,237.6 L566.9,237.9 L569.6,238.3 L572.3,238.8 L575.1,239.3 L577.9,240.0 L580.8,240.7 L583.7,241.4 L586.7,242.2 L589.7,243.1 L592.8,243.9 L595.9,244.7 L599.0,245.5 L602.2,246.3 L605.5,247.0 L608.8,247.7 L612.2,248.2 L615.6,248.7 L619.1,249.0 L622.6,249.1 L626.2,249.1 L629.8,248.8 L633.5,248.4 L637.0,247.7 L640.5,246.9 L643.8,246.0 L647.1,245.0 L650.3,244.0 L653.4,242.9 L656.4,241.9 L659.4,240.9 L662.2,240.0 L665.0,239.2 L667.8,238.5 L670.6,237.8 L673.3,237.2 L676.1,236.7 L678.8,236.3 L681.6,235.9 L684.3,235.7 L687.0,235.5 L689.7,235.4 L692.5,235.4 L695.2,235.5 L697.9,235.7 L700.6,235.9 L703.3,236.3 L706.0,236.7 L708.7,237.2 L711.4,237.9 L714.1,238.6 L716.8,239.4 L719.5,240.3 L722.3,241.3 L725.0,242.5 L727.7,243.7 L730.5,245.0 L733.3,246.5 L736.0,248.1 L738.8,249.7 L741.6,251.5 L744.4,253.4 L747.2,255.5 L750.0,257.6 L752.9,259.9 L755.7,262.3 L758.6,264.9 L761.4,267.5 L764.3,270.3 L767.2,273.3 L770.1,276.3 L773.0,279.5 L775.9,282.9 L778.8,286.4 L781.7,290.0 L784.6,293.8 L789.5,300.2 L794.3,306.5 L799.2,312.9" transform="translate(0,124.20)" stroke="#7030A0" clip-path="url(#capclip)"/>
</g>
<g fill="none" stroke="#9a9a9a" stroke-width="0.8">
<rect x="186.4" y="153.8" width="609.2" height="276.4"/>
</g>
<g fill="#fff" stroke="#8a8a8a" stroke-width="0.9">
<circle cx="186.4" cy="153.8" r="2.6"/><circle cx="490.5" cy="153.8" r="2.6"/><circle cx="795.6" cy="153.8" r="2.6"/>
<circle cx="186.4" cy="292" r="2.6"/><circle cx="795.6" cy="292" r="2.6"/>
<circle cx="186.4" cy="430.2" r="2.6"/><circle cx="490.5" cy="430.2" r="2.6"/><circle cx="795.6" cy="430.2" r="2.6"/>
</g>
<path d="M490.9,141.5 V151" stroke="#aaa" stroke-width="0.8"/><circle cx="490.9" cy="136.5" r="4.3" fill="#fff" stroke="#9a9a9a" stroke-width="1.6"/><path d="M489,136.5 l4,-1.2 l-1,2.6 z" fill="#888"/>
</svg>
<div class="a" style="left:850px;top:82px;width:1px;height:446px;background:#f4f4f4"></div>
<div class="a" style="left:851px;top:82px;width:1px;height:446px;background:#d0d0d0"></div>
<div class="a" style="left:852px;top:82px;width:148px;height:446px;background:#e6e6e6"></div>
<div class="t" style="left:859px;top:90.0px;font-size:10.8px;line-height:14.0px;color:#c0533a;font-weight:normal;">设置图片格式</div>
<svg class="a" style="left:852;top:82" width="148" height="60">
<path d="M111,11 l2.5,2.5 l2.5,-2.5 z" fill="#666"/>
<path d="M132,9 l5,5 M137,9 l-5,5" stroke="#555" stroke-width="1.1"/>
<g fill="none" stroke="#555" stroke-width="1.1"><path d="M10,33 l5,-5 l5,5 l-5,5 z" fill="#fff"/><path d="M13,30 v-4"/><path d="M20,33 q2,3 0,5"/></g>
<path d="M31,31 l5,-4 l5,4 l-2,6.5 h-6 z" fill="none" stroke="#d4573a" stroke-width="1.3"/>
<rect x="51.5" y="26.5" width="10" height="11" fill="#fff" stroke="#666" stroke-width="1"/><rect x="54" y="29.5" width="5" height="5" fill="#666"/>
<rect x="72.5" y="26.5" width="11" height="11" fill="#fff" stroke="#666" stroke-width="1"/><path d="M73,37 l4,-5 l3,3 l2,-2 l2,4 z" fill="#555"/><circle cx="80" cy="30" r="1" fill="#666"/>
<path d="M8,48.5 h133" stroke="#cfcfcf" stroke-width="1"/>
</g>
</svg>
<div class="a" style="left:985px;top:133px;width:7px;height:228px;background:#fff;border:1px solid #d6d6d6"></div>
<div class="a" style="left:985px;top:361px;width:7px;height:155px;background:#dadada"></div>
<svg class="a" style="left:985;top:133" width="8" height="10"><path d="M2,6 l1.5,-2 l1.5,2 z" fill="#555"/></svg>
<svg class="a" style="left:862;top:134.5px" width="6" height="6"><path d="M1,5 h4 v-4 z" fill="#444"/></svg>
<div class="a" style="left:869px;top:132.5px;width:15px;height:10px;background:#f5c9bb"></div>
<div class="t" style="left:870px;top:133.4px;font-size:6.3px;line-height:8.2px;color:#d4573a;font-weight:normal;">阴影</div>
<div class="t" style="left:870px;top:148.4px;font-size:6.3px;line-height:8.2px;color:#4a4a4a;font-weight:normal;">预设(<u>P</u>)</div>
<div class="a" style="left:971px;top:145.5px;width:14px;height:14px;background:#fff;border:1px solid #d0d0d0;border-right:none"></div>
<div class="a" style="left:975px;top:149.5px;width:6px;height:6px;border:1px solid #555"></div>
<div class="t" style="left:870px;top:164.9px;font-size:6.3px;line-height:8.2px;color:#4a4a4a;font-weight:normal;">颜色(<u>C</u>)</div>
<div class="a" style="left:971px;top:162px;width:14px;height:14px;background:#fff;border:1px solid #d0d0d0;border-right:none"></div>
<svg class="a" style="left:974;top:164px" width="11" height="10"><path d="M2,6 l3,-4 l3,4 z" fill="none" stroke="#666" stroke-width="0.8"/><path d="M1,8 h9" stroke="#888" stroke-width="1"/></svg>
<div class="t" style="left:870px;top:181.4px;font-size:6.3px;line-height:8.2px;color:#4a4a4a;font-weight:normal;">透明度(<u>T</u>)</div>
<div class="a" style="left:902px;top:182.5px;width:1px;height:6px;background:#555"></div>
<div class="a" style="left:903px;top:185.5px;width:35px;height:1px;background:#b8b8b8"></div>
<div class="a" style="left:940px;top:179.5px;width:45px;height:12px;background:#fff;border:1px solid #d0d0d0;border-right:none"></div>
<div class="t" style="left:870px;top:196.6px;font-size:6.3px;line-height:8.2px;color:#4a4a4a;font-weight:normal;">大小(<u>S</u>)</div>
<div class="a" style="left:902px;top:197.7px;width:1px;height:6px;background:#555"></div>
<div class="a" style="left:903px;top:200.7px;width:35px;height:1px;background:#b8b8b8"></div>
<div class="a" style="left:940px;top:194.7px;width:45px;height:12px;background:#fff;border:1px solid #d0d0d0;border-right:none"></div>
<div class="t" style="left:870px;top:211.4px;font-size:6.3px;line-height:8.2px;color:#4a4a4a;font-weight:normal;">模糊(<u>B</u>)</div>
<div class="a" style="left:902px;top:212.5px;width:1px;height:6px;background:#555"></div>
<div class="a" style="left:903px;top:215.5px;width:35px;height:1px;background:#b8b8b8"></div>
<div class="a" style="left:940px;top:209.5px;width:45px;height:12px;background:#fff;border:1px solid #d0d0d0;border-right:none"></div>
<div class="t" style="left:870px;top:226.4px;font-size:6.3px;line-height:8.2px;color:#4a4a4a;font-weight:normal;">角度(<u>A</u>)</div>
<div class="a" style="left:902px;top:227.5px;width:1px;height:6px;background:#555"></div>
<div class="a" style="left:903px;top:230.5px;width:35px;height:1px;background:#b8b8b8"></div>
<div class="a" style="left:940px;top:224.5px;width:45px;height:12px;background:#fff;border:1px solid #d0d0d0;border-right:none"></div>
<div class="t" style="left:870px;top:241.9px;font-size:6.3px;line-height:8.2px;color:#4a4a4a;font-weight:normal;">距离(<u>D</u>)</div>
<div class="a" style="left:902px;top:243px;width:1px;height:6px;background:#555"></div>
<div class="a" style="left:903px;top:246px;width:35px;height:1px;background:#b8b8b8"></div>
<div class="a" style="left:940px;top:240px;width:45px;height:12px;background:#fff;border:1px solid #d0d0d0;border-right:none"></div>
<svg class="a" style="left:862;top:261.8px" width="6" height="6"><path d="M1,5 h4 v-4 z" fill="#444"/></svg>
<div class="a" style="left:869px;top:259.8px;width:15px;height:10px;background:#f5c9bb"></div>
<div class="t" style="left:870px;top:260.7px;font-size:6.3px;line-height:8.2px;color:#d4573a;font-weight:normal;">映像</div>
<div class="t" style="left:870px;top:274.9px;font-size:6.3px;line-height:8.2px;color:#4a4a4a;font-weight:normal;">预设(<u>P</u>)</div>
<div class="a" style="left:971px;top:272px;width:14px;height:14px;background:#fff;border:1px solid #d0d0d0;border-right:none"></div>
<div class="a" style="left:975px;top:276px;width:6px;height:6px;border:1px solid #555"></div>
<div class="t" style="left:870px;top:290.4px;font-size:6.3px;line-height:8.2px;color:#4a4a4a;font-weight:normal;">透明度(<u>T</u>)</div>
<div class="a" style="left:902px;top:291.5px;width:1px;height:6px;background:#555"></div>
<div class="a" style="left:903px;top:294.5px;width:35px;height:1px;background:#b8b8b8"></div>
<div class="a" style="left:940px;top:288.5px;width:45px;height:12px;background:#fff;border:1px solid #d0d0d0;border-right:none"></div>
<div class="t" style="left:870px;top:305.9px;font-size:6.3px;line-height:8.2px;color:#4a4a4a;font-weight:normal;">大小(<u>S</u>)</div>
<div class="a" style="left:902px;top:307px;width:1px;height:6px;background:#555"></div>
<div class="a" style="left:903px;top:310px;width:35px;height:1px;background:#b8b8b8"></div>
<div class="a" style="left:940px;top:304px;width:45px;height:12px;background:#fff;border:1px solid #d0d0d0;border-right:none"></div>
<div class="t" style="left:870px;top:320.9px;font-size:6.3px;line-height:8.2px;color:#4a4a4a;font-weight:normal;">模糊(<u>B</u>)</div>
<div class="a" style="left:902px;top:322px;width:1px;height:6px;background:#555"></div>
<div class="a" style="left:903px;top:325px;width:35px;height:1px;background:#b8b8b8"></div>
<div class="a" style="left:940px;top:319px;width:45px;height:12px;background:#fff;border:1px solid #d0d0d0;border-right:none"></div>
<div class="t" style="left:870px;top:336.4px;font-size:6.3px;line-height:8.2px;color:#4a4a4a;font-weight:normal;">距离(<u>D</u>)</div>
<div class="a" style="left:902px;top:337.5px;width:1px;height:6px;background:#555"></div>
<div class="a" style="left:903px;top:340.5px;width:35px;height:1px;background:#b8b8b8"></div>
<div class="a" style="left:940px;top:334.5px;width:45px;height:12px;background:#fff;border:1px solid #d0d0d0;border-right:none"></div>
<svg class="a" style="left:862;top:356px" width="6" height="6"><path d="M1,5 h4 v-4 z" fill="#444"/></svg>
<div class="a" style="left:869px;top:354px;width:15px;height:10px;background:#f5c9bb"></div>
<div class="t" style="left:870px;top:354.9px;font-size:6.3px;line-height:8.2px;color:#d4573a;font-weight:normal;">发光</div>
<div class="t" style="left:870px;top:369.4px;font-size:6.3px;line-height:8.2px;color:#4a4a4a;font-weight:normal;">预设(<u>P</u>)</div>
<div class="a" style="left:971px;top:366.5px;width:14px;height:14px;background:#fff;border:1px solid #d0d0d0;border-right:none"></div>
<div class="a" style="left:975px;top:370.5px;width:6px;height:6px;border:1px solid #555"></div>
<div class="t" style="left:870px;top:385.9px;font-size:6.3px;line-height:8.2px;color:#4a4a4a;font-weight:normal;">颜色(<u>C</u>)</div>
<div class="a" style="left:971px;top:383px;width:14px;height:14px;background:#fff;border:1px solid #d0d0d0;border-right:none"></div>
<svg class="a" style="left:974;top:385px" width="11" height="10"><path d="M2,6 l3,-4 l3,4 z" fill="none" stroke="#666" stroke-width="0.8"/><path d="M1,8 h9" stroke="#888" stroke-width="1"/></svg>
<div class="t" style="left:870px;top:401.9px;font-size:6.3px;line-height:8.2px;color:#4a4a4a;font-weight:normal;">大小(<u>S</u>)</div>
<div class="a" style="left:902px;top:403px;width:1px;height:6px;background:#555"></div>
<div class="a" style="left:903px;top:406px;width:35px;height:1px;background:#b8b8b8"></div>
<div class="a" style="left:940px;top:400px;width:45px;height:12px;background:#fff;border:1px solid #d0d0d0;border-right:none"></div>
<div class="t" style="left:870px;top:417.4px;font-size:6.3px;line-height:8.2px;color:#4a4a4a;font-weight:normal;">透明度(<u>T</u>)</div>
<div class="a" style="left:902px;top:418.5px;width:1px;height:6px;background:#555"></div>
<div class="a" style="left:903px;top:421.5px;width:35px;height:1px;background:#b8b8b8"></div>
<div class="a" style="left:940px;top:415.5px;width:45px;height:12px;background:#fff;border:1px solid #d0d0d0;border-right:none"></div>
<svg class="a" style="left:862;top:437" width="6" height="6"><path d="M1,1 l4,2 l-4,2 z" fill="#666"/></svg>
<div class="t" style="left:871px;top:436.2px;font-size:6.3px;line-height:8.2px;color:#333;font-weight:normal;">柔化边缘</div>
<svg class="a" style="left:862;top:450" width="6" height="6"><path d="M1,5 h4 v-4 z" fill="#444"/></svg>
<div class="t" style="left:871px;top:448.9px;font-size:6.3px;line-height:8.2px;color:#d4573a;font-weight:normal;">三维格式</div>
<div class="t" style="left:880px;top:460.9px;font-size:6.3px;line-height:8.2px;color:#555;font-weight:normal;">顶部棱台(<u>T</u>)</div>
<div class="t" style="left:915px;top:473.9px;font-size:6.3px;line-height:8.2px;color:#555;font-weight:normal;">宽度(<u>W</u>)</div>
<div class="a" style="left:940px;top:472.5px;width:45px;height:11px;background:#fff;border:1px solid #d0d0d0;border-right:none"></div>
<div class="t" style="left:944px;top:473.6px;font-size:6.8px;line-height:8.8px;color:#444;font-weight:normal;">0 磅</div>
<div class="t" style="left:915px;top:488.9px;font-size:6.3px;line-height:8.2px;color:#555;font-weight:normal;">高度(<u>H</u>)</div>
<div class="a" style="left:940px;top:488px;width:45px;height:11px;background:#fff;border:1px solid #d0d0d0;border-right:none"></div>
<div class="t" style="left:944px;top:489.1px;font-size:6.8px;line-height:8.8px;color:#444;font-weight:normal;">0 磅</div>
<div class="t" style="left:873px;top:502.9px;font-size:6.3px;line-height:8.2px;color:#555;font-weight:normal;">底部棱台(<u>B</u>)</div>
<div class="a" style="left:985px;top:503px;width:7px;height:7px;background:#fff;border:1px solid #ccc"></div>
<div class="a" style="left:871px;top:511px;width:94px;height:7px;background:#fff;border:1px solid #d6d6d6"></div>
<div class="a" style="left:978px;top:511px;width:7px;height:7px;background:#fff;border:1px solid #ccc"></div>
<div class="a" style="left:0px;top:528px;width:1000px;height:13px;background:#f1f1f1;border-top:1px solid #dcdcdc"></div>
<div class="t" style="left:6px;top:530.9px;font-size:6.3px;line-height:8.2px;color:#555;font-weight:normal;">幻灯片 第 1 张, 共 1 张</div>
<svg class="a" style="left:80;top:530" width="10" height="10"><rect x="1.5" y="1.5" width="6" height="6" fill="none" stroke="#777" stroke-width="0.8"/><path d="M5,5 l3,3" stroke="#777" stroke-width="0.8"/></svg>
<div class="t" style="left:97px;top:530.9px;font-size:6.3px;line-height:8.2px;color:#555;font-weight:normal;">中文(中国)</div>
<div class="t" style="left:761px;top:530.9px;font-size:6.3px;line-height:8.2px;color:#555;font-weight:normal;">备注</div>
<div class="t" style="left:793px;top:530.9px;font-size:6.3px;line-height:8.2px;color:#555;font-weight:normal;">批注</div>
<svg class="a" style="left:752px;top:529px" width="42" height="12"><path d="M3.5,2 l-2,4 h4 z M3.5,6 v4 M1,10 h5" fill="none" stroke="#777" stroke-width="0.9"/><path d="M32,3 h7 v5 h-4 l-2,2 v-2 h-1 z" fill="#555"/></svg>
<div class="a" style="left:816px;top:529px;width:17px;height:12px;background:#d6d6d6"></div>
<svg class="a" style="left:816;top:529" width="40" height="12"><g fill="none" stroke="#777" stroke-width="0.7"><rect x="4.5" y="3.5" width="6" height="5"/><rect x="26.5" y="3.5" width="2.5" height="2"/><rect x="30.5" y="3.5" width="2.5" height="2"/><rect x="26.5" y="6.5" width="2.5" height="2"/><rect x="30.5" y="6.5" width="2.5" height="2"/></g></svg>
<div class="a" style="left:0px;top:541px;width:1000px;height:5px;background:#93a9c8"></div>
<div class="a" style="left:94px;top:541px;width:31px;height:5px;background:#c2d0e1;border:1px solid #8aa0bf;border-bottom:none"></div>
<div class="a" style="left:127px;top:541px;width:30px;height:5px;background:#c2d0e1;border:1px solid #8aa0bf;border-bottom:none"></div>
<div class="a" style="left:160px;top:541px;width:28px;height:5px;background:#c2d0e1;border:1px solid #8aa0bf;border-bottom:none"></div>
<svg class="a" style="left:0;top:541px" width="200" height="5"><circle cx="14" cy="5" r="4" fill="#d8e2ee"/><circle cx="41" cy="5" r="2.5" fill="#9bd14a"/><circle cx="46" cy="5" r="2.5" fill="#4aa7e8"/><circle cx="75" cy="5" r="3" fill="#2a8fe0"/><circle cx="112" cy="5" r="3" fill="#5cc25c"/><rect x="136" y="3" width="10" height="2" fill="#e8d8c0"/><path d="M170,5 l5,-3 l3,3 z" fill="#e23a2a"/></svg>
<svg class="a" style="left:0;top:0" width="1000" height="546">
<path d="M727,497 C727,486 735,477 748,477 L759,477 C761,477 762,474 764,469 C767,461 773,458 782,457.3 L831,454.6 L851,454.6 L851,528 L722,528 Z" fill="#e6e6e6"/>
<g fill="#fff" stroke="#c4c4c4" stroke-width="0.9">
<path d="M830.5,456 a5.5,4.5 0 0 1 11,0 z" />
<ellipse cx="848.5" cy="447.2" rx="5.8" ry="7.2"/><ellipse cx="864.6" cy="448.9" rx="6.2" ry="7.2"/>
</g>
<g fill="none" stroke-linecap="square" stroke-linejoin="miter">
<g stroke="#b9b9b9" stroke-width="5.4" transform="translate(0.8,0.8)">
<path d="M882,468 L875,478 L883,478 L874,489 M873,493 L886,490"/>
<path d="M889,469 H904 L891,480 M894,473 L905,480 M890,484 H905 M897,484 V494 M888,494 H906"/>
<path d="M910,469 H920 L918,480 H911 V476 M911,484 H921 Q921,494 914,494"/>
<path d="M933,467 L924,478 M933,467 L943,478 M928,481 H939 M929,485 L931,490 M938,485 L936,490 M924,494 H943"/>
</g>
<g stroke="#fafafa" stroke-width="3.6">
<path d="M882,468 L875,478 L883,478 L874,489 M873,493 L886,490"/>
<path d="M889,469 H904 L891,480 M894,473 L905,480 M890,484 H905 M897,484 V494 M888,494 H906"/>
<path d="M910,469 H920 L918,480 H911 V476 M911,484 H921 Q921,494 914,494"/>
<path d="M933,467 L924,478 M933,467 L943,478 M928,481 H939 M929,485 L931,490 M938,485 L936,490 M924,494 H943"/>
</g>
</g>
<text x="866" y="515" font-family="Liberation Sans, sans-serif" font-size="13" fill="#fff" opacity="0.7" letter-spacing="0.5">jingyan.com</text>
</svg>
<div class="a" style="left:859px;top:519px;width:66px;height:22px;background:#fff;border-radius:11px;opacity:0.9"></div>
<div class="a" style="left:925px;top:529.5px;width:75px;height:11.5px;background:#f4f4f4"></div>
<svg class="a" style="left:850;top:505" width="150" height="41">
<circle cx="21" cy="24" r="11.5" fill="#28a745" stroke="#dfeee2" stroke-width="1"/>
<path d="M9.5,24 a11.5,11.5 0 0 1 23,0 z" fill="#1b8a3a"/>
<text x="21" y="26.5" font-family="Liberation Sans" font-size="6.5" fill="#fff" text-anchor="middle">62%</text>
<path d="M36,24 v-4 M34.5,21.5 l1.5,-1.5 l1.5,1.5" stroke="#e03b3b" stroke-width="0.8" fill="none"/>
<path d="M36,27 v4 M34.5,29.5 l1.5,1.5 l1.5,-1.5" stroke="#2aa04a" stroke-width="0.8" fill="none"/>
<text x="45" y="23" font-family="Liberation Sans" font-size="5.5" fill="#333">7.7K/s</text>
<text x="45" y="31" font-family="Liberation Sans" font-size="5.5" fill="#333">0.6K/s</text>
<circle cx="65" cy="24" r="3.8" fill="#3a7bd5"/><circle cx="69.5" cy="21" r="1.8" fill="#e02b2b"/>
<path d="M73,22 q3,8 -6,12" fill="none" stroke="#2aa04a" stroke-width="1.6"/>
<g fill="#333">
<text x="80" y="33" font-family="Liberation Sans" font-size="8" font-weight="bold">五</text>
</g>
<path d="M98,25 a4,4 0 1 1 -4,6 a3,3 0 0 0 4,-6 z" fill="#222"/>
<circle cx="106" cy="28" r="1" fill="#333"/><path d="M109,28 l2,2 l-2,2" stroke="#333" stroke-width="1" fill="none"/>
<rect x="116.5" y="25.5" width="8" height="6" fill="#ddd" stroke="#555" stroke-width="0.8"/>
<circle cx="131" cy="26" r="2" fill="#ccc"/><path d="M128,32 q3,-4 6,0 z" fill="#ccc"/>
<path d="M139,33 l5,-5 a2.5,2.5 0 1 1 2,-2" stroke="#222" stroke-width="1.4" fill="none"/>
</svg>
</body></html>
